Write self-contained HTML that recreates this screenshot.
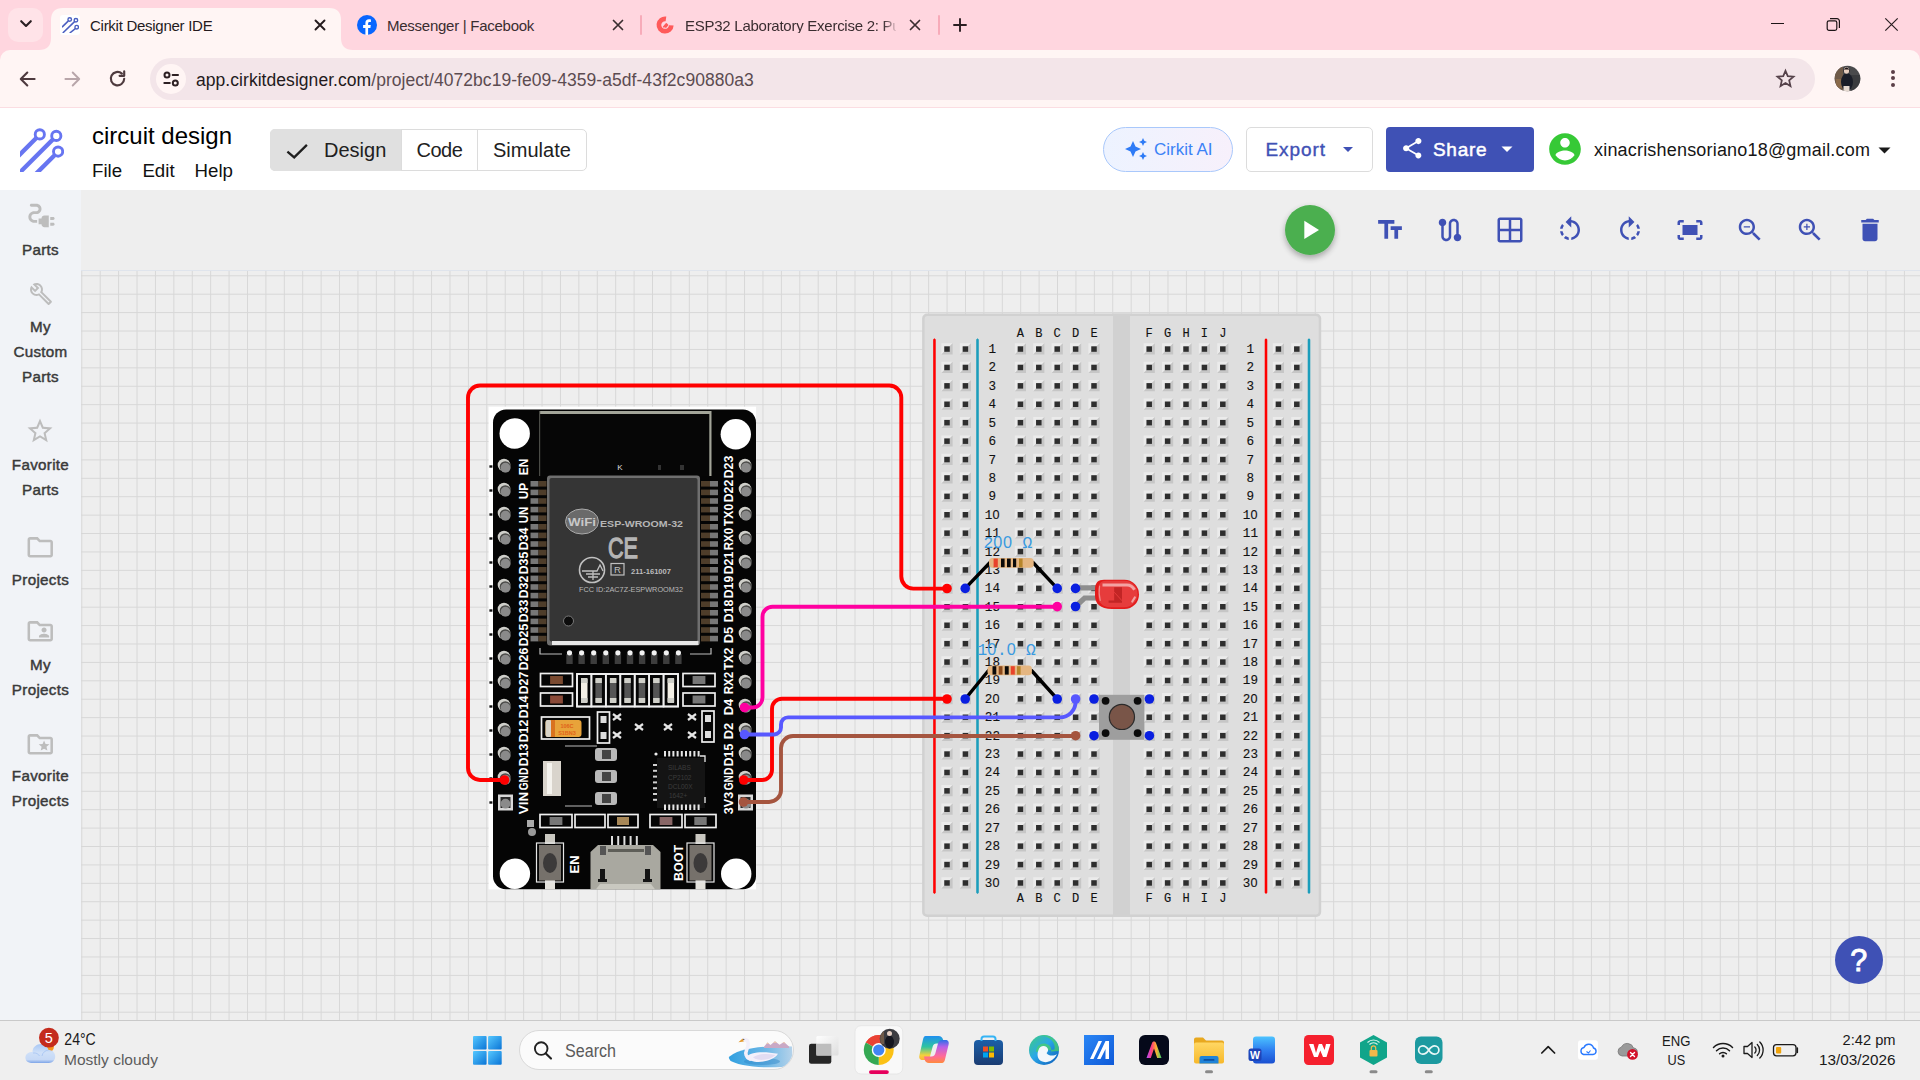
<!DOCTYPE html>
<html lang="en"><head><meta charset="utf-8"><title>Cirkit Designer IDE</title>
<style>
*{box-sizing:border-box;margin:0;padding:0}
html,body{width:1920px;height:1080px;overflow:hidden;background:#eee;font-family:"Liberation Sans",sans-serif;}
.abs{position:absolute}
.t{position:absolute;white-space:nowrap;line-height:1}
svg{display:block}
/* chrome */
#tabstrip{position:absolute;left:0;top:0;width:1920px;height:64px;background:#ffd6df}
#toolbar{position:absolute;left:0;top:50px;width:1920px;height:58px;background:#fff5f4;border-bottom:1px solid #fbdde2;border-radius:10px 10px 0 0}
#omni{position:absolute;left:150px;top:58px;width:1665px;height:42px;border-radius:21px;background:#f3e5e9}
/* app header */
#apphead{position:absolute;left:0;top:108px;width:1920px;height:82px;background:#fff}
#sidebar{position:absolute;left:0;top:190px;width:81px;height:830px;background:#f1f3f7}
#canvas{position:absolute;left:81px;top:190px;width:1839px;height:830px;background:#eeeeee;overflow:hidden}
#taskbar{position:absolute;left:0;top:1020px;width:1920px;height:60px;background:#efefef;border-top:1px solid #c9c9c9}
</style></head><body>
<div id="tabstrip"></div>
<!-- tab search button -->
<div class="abs" style="left:8px;top:8px;width:35px;height:34px;border-radius:10px;background:#ffe3e8"></div>
<svg class="abs" style="left:19px;top:19px" width="14" height="10" viewBox="0 0 14 10"><path d="M2.2 2.2 L7 7 L11.8 2.2" fill="none" stroke="#2a1f22" stroke-width="2.1" stroke-linecap="round" stroke-linejoin="round"/></svg>
<div id="toolbar"></div>
<!-- active tab -->
<svg class="abs" style="left:39px;top:8px" width="314" height="42" viewBox="0 0 314 42"><path d="M0 42 C8 42 12 38 12 30 L12 12 C12 4 16 0 24 0 L290 0 C298 0 302 4 302 12 L302 30 C302 38 306 42 314 42 Z" fill="#fff5f4"/></svg>
<!-- cirkit favicon -->
<div class="abs" style="left:60px;top:15px;width:20px;height:20px;border-radius:3px;background:#fff"></div>
<svg class="abs" style="left:62px;top:16px" width="17" height="17" viewBox="0 0 44 44"><g fill="none" stroke="#4a5fc1" stroke-width="3.6"><circle cx="20" cy="9" r="4.6"/><circle cx="36" cy="11" r="4.6"/><circle cx="38" cy="29" r="4.6"/></g><g stroke="#4a5fc1" stroke-width="4" stroke-linecap="butt"><path d="M16.5 12.5 L0 29"/><path d="M32.5 14.5 L2 44"/><path d="M34.5 32.5 L20 44"/></g></svg>
<span class="t" id="tab1" style="left:90px;top:17.5px;font-size:15px;letter-spacing:-.27px;color:#241a1d">Cirkit Designer IDE</span>
<svg class="abs" style="left:314px;top:19px" width="12" height="12" viewBox="0 0 12 12"><path d="M1.5 1.5 L10.5 10.5 M10.5 1.5 L1.5 10.5" stroke="#241a1d" stroke-width="1.9" stroke-linecap="round"/></svg>
<!-- facebook tab -->
<svg class="abs" style="left:357px;top:15px" width="20" height="20" viewBox="0 0 20 20"><circle cx="10" cy="10" r="10" fill="#0866ff"/><path d="M11.1 20 V12.9 H13.4 L13.8 10.1 H11.1 V8.4 C11.1 7.5 11.4 6.9 12.7 6.9 H13.9 V4.5 C13.6 4.4 12.8 4.3 11.9 4.3 C9.8 4.3 8.4 5.6 8.4 7.9 V10.1 H6.1 V12.9 H8.4 V19.9 Z" fill="#fff"/></svg>
<span class="t" id="tab2" style="left:387px;top:17.5px;font-size:15px;letter-spacing:-.26px;color:#3a2d30">Messenger | Facebook</span>
<svg class="abs" style="left:612px;top:19px" width="12" height="12" viewBox="0 0 12 12"><path d="M1.5 1.5 L10.5 10.5 M10.5 1.5 L1.5 10.5" stroke="#3a2d30" stroke-width="1.7" stroke-linecap="round"/></svg>
<div class="abs" style="left:640px;top:15px;width:2px;height:20px;background:#f7abb9;border-radius:1px"></div>
<!-- esp32 tab -->
<svg class="abs" style="left:655px;top:16px" width="20" height="20" viewBox="0 0 20 20"><path d="M16.29 9.32 A6.2 6.2 0 1 1 10.96 2.86" fill="none" stroke="#ff5a5a" stroke-width="4.700"/><path d="M8.300 11.300 L11.300 7.800 L12.600 9 L10.500 11.600" fill="#ff5a5a" stroke="#ff5a5a" stroke-width="1.400" stroke-linejoin="round"/></svg>
<span class="t" id="tab3" style="left:685px;top:17.5px;font-size:15px;letter-spacing:-.26px;color:#3a2d30;width:211px;overflow:hidden;-webkit-mask-image:linear-gradient(90deg,#000 94%,rgba(0,0,0,.15) 100%);mask-image:linear-gradient(90deg,#000 94%,rgba(0,0,0,.15) 100%)">ESP32 Laboratory Exercise 2: Pu</span>
<svg class="abs" style="left:909px;top:19px" width="12" height="12" viewBox="0 0 12 12"><path d="M1.5 1.5 L10.5 10.5 M10.5 1.5 L1.5 10.5" stroke="#3a2d30" stroke-width="1.7" stroke-linecap="round"/></svg>
<div class="abs" style="left:938px;top:15px;width:2px;height:20px;background:#f7abb9;border-radius:1px"></div>
<svg class="abs" style="left:953px;top:18px" width="14" height="14" viewBox="0 0 14 14"><path d="M7 1 V13 M1 7 H13" stroke="#2a1f22" stroke-width="1.9" stroke-linecap="round"/></svg>
<!-- window controls -->
<div class="abs" style="left:1771px;top:23px;width:13px;height:1.3px;background:#1d1416"></div>
<svg class="abs" style="left:1826px;top:17px" width="15" height="15" viewBox="0 0 15 15"><rect x="1.2" y="3.8" width="9.6" height="9.6" rx="1.8" fill="none" stroke="#1d1416" stroke-width="1.2"/><path d="M4 1.7 H11 A2.4 2.4 0 0 1 13.4 4.1 V11" fill="none" stroke="#1d1416" stroke-width="1.2"/></svg>
<svg class="abs" style="left:1884px;top:17px" width="15" height="15" viewBox="0 0 15 15"><path d="M1.3 1.3 L13.7 13.7 M13.7 1.3 L1.3 13.7" stroke="#2a1f22" stroke-width="1.2"/></svg>
<!-- nav buttons -->
<svg class="abs" style="left:19px;top:70.5px" width="17" height="16" viewBox="0 0 17 16"><path d="M8.300 1.500 L1.800 8 L8.300 14.500 M2.100 8 H15.600" fill="none" stroke="#4e3a3e" stroke-width="2.100" stroke-linecap="round" stroke-linejoin="round"/></svg>
<svg class="abs" style="left:63.5px;top:70.500px" width="17" height="16" viewBox="0 0 17 16"><path d="M8.700 1.500 L15.200 8 L8.700 14.500 M14.900 8 H1.400" fill="none" stroke="#b8a5a9" stroke-width="1.9" stroke-linecap="round" stroke-linejoin="round"/></svg>
<svg class="abs" style="left:108px;top:69px" width="19" height="19" viewBox="0 0 19 19"><path d="M16.200 9.800 A6.700 6.700 0 1 1 13.900 4.600" fill="none" stroke="#4e3a3e" stroke-width="2.150" stroke-linecap="round"/><path d="M16.200 2.200 V6.800 H11.600" fill="none" stroke="#4e3a3e" stroke-width="2.150" stroke-linecap="round" stroke-linejoin="round"/></svg>
<div id="omni"></div>
<div class="abs" style="left:156px;top:64px;width:30px;height:30px;border-radius:15px;background:#fff5f4"></div>
<svg class="abs" style="left:162px;top:70px" width="18" height="18" viewBox="0 0 18 18"><g fill="none" stroke="#2d2023" stroke-width="2" stroke-linecap="round"><circle cx="5" cy="5" r="2.500"/><path d="M10.600 5 H16"/><circle cx="13.300" cy="13" r="2.500"/><path d="M2.300 13 H7.800"/></g></svg>
<span class="t" id="url" style="left:196px;top:71.800px;font-size:17.5px;letter-spacing:.05px;color:#5c4c51"><span style="color:#231a1c">app.cirkitdesigner.com</span>/project/4072bc19-fe09-4359-a5df-43f2c90880a3</span>
<svg class="abs" style="left:1775px;top:68px" width="21" height="21" viewBox="0 0 24 24"><path d="M12 3.2 L14.6 9.3 L21.2 9.9 L16.2 14.2 L17.7 20.7 L12 17.2 L6.3 20.7 L7.8 14.2 L2.8 9.9 L9.4 9.3 Z" fill="none" stroke="#55424a" stroke-width="2" stroke-linejoin="miter"/></svg>
<!-- profile avatar -->
<svg class="abs" style="left:1834px;top:65px" width="27" height="27" viewBox="0 0 27 27"><defs><clipPath id="avc"><circle cx="13.5" cy="13.5" r="12.8"/></clipPath></defs><g clip-path="url(#avc)"><rect width="27" height="27" fill="#4a4a4c"/><rect x="0" y="0" width="9" height="27" fill="#6f5a48"/><rect x="17" y="10" width="10" height="17" fill="#3a3b3e"/><rect x="2" y="14" width="6" height="9" fill="#8a6a4a"/><ellipse cx="13" cy="17" rx="6" ry="9" fill="#1a1d28"/><ellipse cx="12.5" cy="5.5" rx="2.6" ry="3.2" fill="#e8cfc0"/><path d="M9.5 5 Q12.5 0 15.6 5 L15.6 8 L14.8 4.6 L10.2 4.6 L9.5 8Z" fill="#1c1416"/><rect x="9.5" y="21" width="6" height="6" fill="#e6d9d0"/></g></svg>

<div class="abs" style="left:1890.5px;top:69.5px;width:4px;height:4px;border-radius:2px;background:#5c3f47"></div>
<div class="abs" style="left:1890.5px;top:76.3px;width:4px;height:4px;border-radius:2px;background:#5c3f47"></div>
<div class="abs" style="left:1890.5px;top:83px;width:4px;height:4px;border-radius:2px;background:#5c3f47"></div>
<div id="apphead"></div>
<!-- logo -->
<svg class="abs" style="left:20px;top:126px" width="44" height="45.700" viewBox="0 0 44 45.700"><g fill="none" stroke="#6775f1" stroke-width="2.900"><circle cx="19.800" cy="8.400" r="4.600"/><circle cx="36.300" cy="9.900" r="4.600"/><circle cx="38.100" cy="25.600" r="4.600"/></g><g stroke="#6775f1" stroke-width="4.400"><path d="M16.300 12 L-2 30.300"/><path d="M32.800 13.500 L-2 48.300"/><path d="M34.600 29.200 L14 49.800"/></g></svg>
<span class="t" id="title" style="left:92px;top:124px;font-size:24px;color:#000">circuit design</span>
<span class="t" id="mfile" style="left:92px;top:162.300px;font-size:18.700px;color:#111">File</span>
<span class="t" id="medit" style="left:142.400px;top:162.300px;font-size:18.700px;color:#111">Edit</span>
<span class="t" id="mhelp" style="left:194.500px;top:162.300px;font-size:18.700px;color:#111">Help</span>
<!-- toggle group -->
<div class="abs" style="left:270px;top:129px;width:317px;height:42px;border:1px solid #dcdcdc;border-radius:5px;background:#fff"></div>
<div class="abs" style="left:270px;top:129px;width:131px;height:42px;border-radius:5px 0 0 5px;background:#e0e0e0"></div>
<div class="abs" style="left:400.5px;top:130px;width:1px;height:40px;background:#dcdcdc"></div>
<div class="abs" style="left:477.3px;top:130px;width:1px;height:40px;background:#dcdcdc"></div>
<svg class="abs" style="left:283px;top:138px" width="30" height="26" viewBox="283 138 30 26"><path d="M287.400 151.600 L294.200 157.400 L306.900 144.900" fill="none" stroke="#1f1f1f" stroke-width="2.300"/></svg>
<span class="t" id="bdesign" style="left:324px;top:139.800px;font-size:20px;color:#212121">Design</span>
<span class="t" id="bcode" style="left:416.500px;top:139.800px;font-size:20px;letter-spacing:-.5px;color:#212121">Code</span>
<span class="t" id="bsim" style="left:493px;top:139.800px;font-size:20px;color:#212121">Simulate</span>
<!-- Cirkit AI -->
<div class="abs" style="left:1103px;top:127px;width:130px;height:45px;border-radius:22.5px;border:1px solid #a9c8fb;background:linear-gradient(90deg,#edf3ff,#f7f0fb)"></div>
<svg class="abs" style="left:1124px;top:137px" width="24" height="24" viewBox="0 0 24 24"><path d="M19 9l1.250-2.750L23 5l-2.750-1.250L19 1l-1.250 2.750L15 5l2.750 1.250L19 9zm-7.500.5L9 4 6.500 9.500 1 12l5.500 2.500L9 20l2.500-5.500L17 12l-5.500-2.500zM19 15l-1.250 2.750L15 19l2.750 1.250L19 23l1.250-2.750L23 19l-2.750-1.250L19 15z" fill="#2f7bf6"/></svg>
<span class="t" id="cai" style="left:1154px;top:141px;font-size:17px;color:#3b82f6">Cirkit AI</span>
<!-- Export -->
<div class="abs" style="left:1246px;top:127px;width:127px;height:45px;border-radius:5px;border:1px solid #dcdcdc;background:#fff"></div>
<span class="t" id="bexport" style="left:1265.500px;top:140px;font-size:19px;letter-spacing:.9px;-webkit-text-stroke:.38px #3f51b5;color:#3f51b5">Export</span>
<svg class="abs" style="left:1342px;top:146px" width="12" height="7" viewBox="0 0 12 7"><path d="M1 1 H11 L6 6 Z" fill="#3f51b5"/></svg>
<!-- Share -->
<div class="abs" style="left:1386px;top:127px;width:148px;height:45px;border-radius:4px;background:#3f51b5"></div>
<svg class="abs" style="left:1400.200px;top:136.200px" width="24.500" height="24.500" viewBox="0 0 24 24"><path d="M18 16.080c-.76 0-1.440.3-1.960.77L8.910 12.700c.05-.23.090-.46.090-.7s-.04-.47-.09-.7l7.050-4.110c.54.5 1.250.81 2.040.81 1.660 0 3-1.340 3-3s-1.340-3-3-3-3 1.340-3 3c0 .24.040.47.090.7L8.040 9.810C7.500 9.310 6.790 9 6 9c-1.660 0-3 1.340-3 3s1.340 3 3 3c.79 0 1.500-.31 2.040-.81l7.120 4.160c-.05.21-.08.430-.08.650 0 1.610 1.310 2.920 2.920 2.920s2.920-1.310 2.920-2.920-1.310-2.920-2.920-2.920z" fill="#fff"/></svg>
<span class="t" id="bshare" style="left:1433px;top:140px;font-size:19px;letter-spacing:.7px;-webkit-text-stroke:.5px #fff;color:#fff">Share</span>
<svg class="abs" style="left:1501px;top:146px" width="12" height="7" viewBox="0 0 12 7"><path d="M0.500 0.500 H11.500 L6 6 Z" fill="#fff"/></svg>
<!-- account -->
<div class="abs" style="left:1551px;top:135px;width:28px;height:28px;border-radius:14px;background:#fff"></div>
<svg class="abs" style="left:1546px;top:130px" width="38" height="38" viewBox="0 0 24 24"><path d="M12 2C6.480 2 2 6.480 2 12s4.480 10 10 10 10-4.480 10-10S17.520 2 12 2zm0 3c1.660 0 3 1.340 3 3s-1.340 3-3 3-3-1.340-3-3 1.340-3 3-3zm0 14.200c-2.500 0-4.710-1.280-6-3.220.03-1.990 4-3.080 6-3.080 1.990 0 5.970 1.090 6 3.080-1.290 1.940-3.500 3.220-6 3.220z" fill="#36c936"/></svg>
<span class="t" id="email" style="left:1594px;top:140.800px;font-size:18px;letter-spacing:.19px;color:#161616">xinacrishensoriano18@gmail.com</span>
<svg class="abs" style="left:1878px;top:147px" width="13" height="7" viewBox="0 0 13 7"><path d="M0.500 0.500 H12.500 L6.500 6.500 Z" fill="#1a1a1a"/></svg>
<div id="sidebar"></div>
<svg class="abs" style="left:23.500px;top:198px" width="35" height="35" viewBox="0 0 24 24"><g fill="#bdbdbd"><path d="M21 14c0-.55-.45-1-1-1h-2v2h2c.55 0 1-.45 1-1zM20 17h-2v2h2c.55 0 1-.45 1-1s-.45-1-1-1zM12 14h-2v4h2c0 1.100.9 2 2 2h3v-8h-3c-1.100 0-2 .9-2 2z"/><path d="M5 13c0-1.100.9-2 2-2h1.500c1.930 0 3.500-1.570 3.500-3.500S10.430 4 8.500 4H5c-.55 0-1 .45-1 1s.45 1 1 1h3.500c.83 0 1.500.67 1.500 1.500S9.330 9 8.500 9H7c-2.210 0-4 1.790-4 4s1.790 4 4 4h2v-2H7c-1.100 0-2-.9-2-2z"/></g></svg>
<span class="t sb" id="sb1" style="top:242.1px">Parts</span>
<svg class="abs" style="left:28.500px;top:281.500px" width="24" height="24" viewBox="0 0 24 24"><path fill="#bdbdbd" d="M22.610 18.990l-9.080-9.080c.93-2.340.45-5.100-1.440-7C9.790.61 6.210.4 3.660 2.260L7.500 6.110 6.080 7.520 2.250 3.690C.39 6.230.6 9.820 2.900 12.110c1.860 1.860 4.570 2.350 6.890 1.480l9.110 9.110c.39.390 1.020.39 1.410 0l2.300-2.300c.4-.38.400-1.010 0-1.410zm-3 1.600l-9.460-9.460c-.61.45-1.290.72-2 .82-1.360.2-2.790-.21-3.830-1.250C3.370 9.760 2.930 8.500 3 7.260l3.090 3.090 4.240-4.240-3.090-3.090c1.240-.07 2.490.37 3.440 1.310 1.080 1.080 1.490 2.570 1.240 3.960-.12.710-.42 1.370-.88 1.960l9.450 9.450-.88.890z"/></svg>
<span class="t sb" id="sb2" style="top:318.9px">My</span>
<span class="t sb" id="sb3" style="top:343.9px">Custom</span>
<span class="t sb" id="sb4" style="top:368.5px">Parts</span>
<svg class="abs" style="left:25.300px;top:415.700px" width="30" height="30" viewBox="0 0 24 24"><path fill="#bdbdbd" d="M22 9.240l-7.190-.62L12 2 9.190 8.630 2 9.240l5.460 4.730L5.820 21 12 17.270 18.180 21l-1.630-7.030L22 9.240zM12 15.400l-3.760 2.270 1-4.280-3.320-2.880 4.380-.38L12 6.100l1.710 4.040 4.380.38-3.320 2.880 1 4.280L12 15.400z"/></svg>
<span class="t sb" id="sb5" style="top:456.9px">Favorite</span>
<span class="t sb" id="sb6" style="top:481.9px">Parts</span>
<svg class="abs" style="left:25.300px;top:531.700px" width="30.500" height="30.500" viewBox="0 0 24 24"><path fill="#bdbdbd" d="M9.170 6l2 2H20v10H4V6h5.170M10 4H4c-1.100 0-1.990.9-1.990 2L2 18c0 1.100.9 2 2 2h16c1.100 0 2-.9 2-2V8c0-1.100-.9-2-2-2h-8l-2-2z"/></svg>
<span class="t sb" id="sb7" style="top:571.7px">Projects</span>
<svg class="abs" style="left:25.300px;top:615.600px" width="30.500" height="30.500" viewBox="0 0 24 24"><path fill="#bdbdbd" d="M20 6h-8l-2-2H4c-1.100 0-1.990.9-1.990 2L2 18c0 1.100.9 2 2 2h16c1.100 0 2-.9 2-2V8c0-1.100-.9-2-2-2zm0 12H4V6h5.170l2 2H20v10zm-5-5c1.100 0 2-.9 2-2s-.9-2-2-2-2 .9-2 2 .9 2 2 2zm-4 4h8v-1c0-1.330-2.670-2-4-2s-4 .67-4 2v1z"/></svg>
<span class="t sb" id="sb8" style="top:657.2px">My</span>
<span class="t sb" id="sb9" style="top:681.6px">Projects</span>
<svg class="abs" style="left:25.300px;top:728.500px" width="30.500" height="30.500" viewBox="0 0 24 24"><path fill="#bdbdbd" d="M20 6h-8l-2-2H4c-1.100 0-2 .9-2 2v12c0 1.100.9 2 2 2h16c1.100 0 2-.9 2-2V8c0-1.100-.9-2-2-2zm0 12H4V6h5.170l2 2H20v10zm-6.920-3.960L12.390 17 15 15.470 17.610 17l-.69-2.960 2.300-1.990-3.030-.26L15 9l-1.190 2.790-3.030.26z"/></svg>
<span class="t sb" id="sb10" style="top:768.2px">Favorite</span>
<span class="t sb" id="sb11" style="top:793.0px">Projects</span>
<style>.sb{left:0;width:81px;text-align:center;font-size:15.200px;color:#3a3a3a;letter-spacing:.3px;-webkit-text-stroke:.45px #3a3a3a}</style>
<div id="canvas"></div>
<svg class="abs" style="left:81px;top:190px" width="1839" height="830" viewBox="81 190 1839 830" font-family="'Liberation Mono',monospace">
<defs>
<pattern id="grid" x="81.30" y="275.30" width="18.41" height="18.41" patternUnits="userSpaceOnUse"><rect x="0" y="0" width="1" height="18.41" fill="#d7d7d7"/><rect x="0" y="0" width="18.41" height="1" fill="#d7d7d7"/></pattern>
<g id="h"><path d="M-5.600 -5.500 H5.600 L-5.600 5.700 Z" fill="#ebebeb"/><path d="M5.600 5.700 H-5.600 L5.600 -5.500 Z" fill="#c6c6c6"/><rect x="-2.750" y="-2.500" width="5.500" height="5.500" fill="#2e2e2e"/></g>
</defs>
<rect x="81" y="270" width="1839" height="750" fill="url(#grid)"/>
<rect x="81" y="270" width="1839" height="1" fill="#dfe4ec"/><g id="bb">
<rect x="922.100" y="313.600" width="399.100" height="603.300" rx="5" fill="#d1d1d1"/>
<rect x="924.600" y="316" width="394.100" height="598.600" rx="3" fill="#dedede"/>
<rect x="1113" y="313.600" width="17" height="603.300" fill="#d1d1d1"/>
<path d="M933.17 339.500 L934.45 338.300 L935.73 339.500 V892.800 L934.45 894 L933.17 892.800 Z" fill="#ff0000"/>
<path d="M1264.72 339.500 L1266.00 338.300 L1267.28 339.500 V892.800 L1266.00 894 L1264.72 892.800 Z" fill="#ff0000"/>
<path d="M976.22 339.500 L977.50 338.300 L978.78 339.500 V892.800 L977.50 894 L976.22 892.800 Z" fill="#1b9dbb"/>
<path d="M1307.72 339.500 L1309.00 338.300 L1310.28 339.500 V892.800 L1309.00 894 L1307.72 892.800 Z" fill="#1b9dbb"/>
<use href="#h" x="947.0" y="348.8"/><use href="#h" x="965.4" y="348.8"/><use href="#h" x="1278.4" y="348.8"/><use href="#h" x="1296.8" y="348.8"/><use href="#h" x="1020.4" y="348.8"/><use href="#h" x="1038.8" y="348.8"/><use href="#h" x="1057.2" y="348.8"/><use href="#h" x="1075.6" y="348.8"/><use href="#h" x="1094.0" y="348.8"/><use href="#h" x="1149.2" y="348.8"/><use href="#h" x="1167.6" y="348.8"/><use href="#h" x="1186.0" y="348.8"/><use href="#h" x="1204.4" y="348.8"/><use href="#h" x="1222.8" y="348.8"/><use href="#h" x="947.0" y="367.2"/><use href="#h" x="965.4" y="367.2"/><use href="#h" x="1278.4" y="367.2"/><use href="#h" x="1296.8" y="367.2"/><use href="#h" x="1020.4" y="367.2"/><use href="#h" x="1038.8" y="367.2"/><use href="#h" x="1057.2" y="367.2"/><use href="#h" x="1075.6" y="367.2"/><use href="#h" x="1094.0" y="367.2"/><use href="#h" x="1149.2" y="367.2"/><use href="#h" x="1167.6" y="367.2"/><use href="#h" x="1186.0" y="367.2"/><use href="#h" x="1204.4" y="367.2"/><use href="#h" x="1222.8" y="367.2"/><use href="#h" x="947.0" y="385.6"/><use href="#h" x="965.4" y="385.6"/><use href="#h" x="1278.4" y="385.6"/><use href="#h" x="1296.8" y="385.6"/><use href="#h" x="1020.4" y="385.6"/><use href="#h" x="1038.8" y="385.6"/><use href="#h" x="1057.2" y="385.6"/><use href="#h" x="1075.6" y="385.6"/><use href="#h" x="1094.0" y="385.6"/><use href="#h" x="1149.2" y="385.6"/><use href="#h" x="1167.6" y="385.6"/><use href="#h" x="1186.0" y="385.6"/><use href="#h" x="1204.4" y="385.6"/><use href="#h" x="1222.8" y="385.6"/><use href="#h" x="947.0" y="404.0"/><use href="#h" x="965.4" y="404.0"/><use href="#h" x="1278.4" y="404.0"/><use href="#h" x="1296.8" y="404.0"/><use href="#h" x="1020.4" y="404.0"/><use href="#h" x="1038.8" y="404.0"/><use href="#h" x="1057.2" y="404.0"/><use href="#h" x="1075.6" y="404.0"/><use href="#h" x="1094.0" y="404.0"/><use href="#h" x="1149.2" y="404.0"/><use href="#h" x="1167.6" y="404.0"/><use href="#h" x="1186.0" y="404.0"/><use href="#h" x="1204.4" y="404.0"/><use href="#h" x="1222.8" y="404.0"/><use href="#h" x="947.0" y="422.4"/><use href="#h" x="965.4" y="422.4"/><use href="#h" x="1278.4" y="422.4"/><use href="#h" x="1296.8" y="422.4"/><use href="#h" x="1020.4" y="422.4"/><use href="#h" x="1038.8" y="422.4"/><use href="#h" x="1057.2" y="422.4"/><use href="#h" x="1075.6" y="422.4"/><use href="#h" x="1094.0" y="422.4"/><use href="#h" x="1149.2" y="422.4"/><use href="#h" x="1167.6" y="422.4"/><use href="#h" x="1186.0" y="422.4"/><use href="#h" x="1204.4" y="422.4"/><use href="#h" x="1222.8" y="422.4"/><use href="#h" x="947.0" y="440.9"/><use href="#h" x="965.4" y="440.9"/><use href="#h" x="1278.4" y="440.9"/><use href="#h" x="1296.8" y="440.9"/><use href="#h" x="1020.4" y="440.9"/><use href="#h" x="1038.8" y="440.9"/><use href="#h" x="1057.2" y="440.9"/><use href="#h" x="1075.6" y="440.9"/><use href="#h" x="1094.0" y="440.9"/><use href="#h" x="1149.2" y="440.9"/><use href="#h" x="1167.6" y="440.9"/><use href="#h" x="1186.0" y="440.9"/><use href="#h" x="1204.4" y="440.9"/><use href="#h" x="1222.8" y="440.9"/><use href="#h" x="947.0" y="459.3"/><use href="#h" x="965.4" y="459.3"/><use href="#h" x="1278.4" y="459.3"/><use href="#h" x="1296.8" y="459.3"/><use href="#h" x="1020.4" y="459.3"/><use href="#h" x="1038.8" y="459.3"/><use href="#h" x="1057.2" y="459.3"/><use href="#h" x="1075.6" y="459.3"/><use href="#h" x="1094.0" y="459.3"/><use href="#h" x="1149.2" y="459.3"/><use href="#h" x="1167.6" y="459.3"/><use href="#h" x="1186.0" y="459.3"/><use href="#h" x="1204.4" y="459.3"/><use href="#h" x="1222.8" y="459.3"/><use href="#h" x="947.0" y="477.7"/><use href="#h" x="965.4" y="477.7"/><use href="#h" x="1278.4" y="477.7"/><use href="#h" x="1296.8" y="477.7"/><use href="#h" x="1020.4" y="477.7"/><use href="#h" x="1038.8" y="477.7"/><use href="#h" x="1057.2" y="477.7"/><use href="#h" x="1075.6" y="477.7"/><use href="#h" x="1094.0" y="477.7"/><use href="#h" x="1149.2" y="477.7"/><use href="#h" x="1167.6" y="477.7"/><use href="#h" x="1186.0" y="477.7"/><use href="#h" x="1204.4" y="477.7"/><use href="#h" x="1222.8" y="477.7"/><use href="#h" x="947.0" y="496.1"/><use href="#h" x="965.4" y="496.1"/><use href="#h" x="1278.4" y="496.1"/><use href="#h" x="1296.8" y="496.1"/><use href="#h" x="1020.4" y="496.1"/><use href="#h" x="1038.8" y="496.1"/><use href="#h" x="1057.2" y="496.1"/><use href="#h" x="1075.6" y="496.1"/><use href="#h" x="1094.0" y="496.1"/><use href="#h" x="1149.2" y="496.1"/><use href="#h" x="1167.6" y="496.1"/><use href="#h" x="1186.0" y="496.1"/><use href="#h" x="1204.4" y="496.1"/><use href="#h" x="1222.8" y="496.1"/><use href="#h" x="947.0" y="514.5"/><use href="#h" x="965.4" y="514.5"/><use href="#h" x="1278.4" y="514.5"/><use href="#h" x="1296.8" y="514.5"/><use href="#h" x="1020.4" y="514.5"/><use href="#h" x="1038.8" y="514.5"/><use href="#h" x="1057.2" y="514.5"/><use href="#h" x="1075.6" y="514.5"/><use href="#h" x="1094.0" y="514.5"/><use href="#h" x="1149.2" y="514.5"/><use href="#h" x="1167.6" y="514.5"/><use href="#h" x="1186.0" y="514.5"/><use href="#h" x="1204.4" y="514.5"/><use href="#h" x="1222.8" y="514.5"/><use href="#h" x="947.0" y="532.9"/><use href="#h" x="965.4" y="532.9"/><use href="#h" x="1278.4" y="532.9"/><use href="#h" x="1296.8" y="532.9"/><use href="#h" x="1020.4" y="532.9"/><use href="#h" x="1038.8" y="532.9"/><use href="#h" x="1057.2" y="532.9"/><use href="#h" x="1075.6" y="532.9"/><use href="#h" x="1094.0" y="532.9"/><use href="#h" x="1149.2" y="532.9"/><use href="#h" x="1167.6" y="532.9"/><use href="#h" x="1186.0" y="532.9"/><use href="#h" x="1204.4" y="532.9"/><use href="#h" x="1222.8" y="532.9"/><use href="#h" x="947.0" y="551.3"/><use href="#h" x="965.4" y="551.3"/><use href="#h" x="1278.4" y="551.3"/><use href="#h" x="1296.8" y="551.3"/><use href="#h" x="1020.4" y="551.3"/><use href="#h" x="1038.8" y="551.3"/><use href="#h" x="1057.2" y="551.3"/><use href="#h" x="1075.6" y="551.3"/><use href="#h" x="1094.0" y="551.3"/><use href="#h" x="1149.2" y="551.3"/><use href="#h" x="1167.6" y="551.3"/><use href="#h" x="1186.0" y="551.3"/><use href="#h" x="1204.4" y="551.3"/><use href="#h" x="1222.8" y="551.3"/><use href="#h" x="947.0" y="569.7"/><use href="#h" x="965.4" y="569.7"/><use href="#h" x="1278.4" y="569.7"/><use href="#h" x="1296.8" y="569.7"/><use href="#h" x="1020.4" y="569.7"/><use href="#h" x="1038.8" y="569.7"/><use href="#h" x="1057.2" y="569.7"/><use href="#h" x="1075.6" y="569.7"/><use href="#h" x="1094.0" y="569.7"/><use href="#h" x="1149.2" y="569.7"/><use href="#h" x="1167.6" y="569.7"/><use href="#h" x="1186.0" y="569.7"/><use href="#h" x="1204.4" y="569.7"/><use href="#h" x="1222.8" y="569.7"/><use href="#h" x="947.0" y="588.1"/><use href="#h" x="965.4" y="588.1"/><use href="#h" x="1278.4" y="588.1"/><use href="#h" x="1296.8" y="588.1"/><use href="#h" x="1020.4" y="588.1"/><use href="#h" x="1038.8" y="588.1"/><use href="#h" x="1057.2" y="588.1"/><use href="#h" x="1075.6" y="588.1"/><use href="#h" x="1094.0" y="588.1"/><use href="#h" x="1149.2" y="588.1"/><use href="#h" x="1167.6" y="588.1"/><use href="#h" x="1186.0" y="588.1"/><use href="#h" x="1204.4" y="588.1"/><use href="#h" x="1222.8" y="588.1"/><use href="#h" x="947.0" y="606.5"/><use href="#h" x="965.4" y="606.5"/><use href="#h" x="1278.4" y="606.5"/><use href="#h" x="1296.8" y="606.5"/><use href="#h" x="1020.4" y="606.5"/><use href="#h" x="1038.8" y="606.5"/><use href="#h" x="1057.2" y="606.5"/><use href="#h" x="1075.6" y="606.5"/><use href="#h" x="1094.0" y="606.5"/><use href="#h" x="1149.2" y="606.5"/><use href="#h" x="1167.6" y="606.5"/><use href="#h" x="1186.0" y="606.5"/><use href="#h" x="1204.4" y="606.5"/><use href="#h" x="1222.8" y="606.5"/><use href="#h" x="947.0" y="625.0"/><use href="#h" x="965.4" y="625.0"/><use href="#h" x="1278.4" y="625.0"/><use href="#h" x="1296.8" y="625.0"/><use href="#h" x="1020.4" y="625.0"/><use href="#h" x="1038.8" y="625.0"/><use href="#h" x="1057.2" y="625.0"/><use href="#h" x="1075.6" y="625.0"/><use href="#h" x="1094.0" y="625.0"/><use href="#h" x="1149.2" y="625.0"/><use href="#h" x="1167.6" y="625.0"/><use href="#h" x="1186.0" y="625.0"/><use href="#h" x="1204.4" y="625.0"/><use href="#h" x="1222.8" y="625.0"/><use href="#h" x="947.0" y="643.4"/><use href="#h" x="965.4" y="643.4"/><use href="#h" x="1278.4" y="643.4"/><use href="#h" x="1296.8" y="643.4"/><use href="#h" x="1020.4" y="643.4"/><use href="#h" x="1038.8" y="643.4"/><use href="#h" x="1057.2" y="643.4"/><use href="#h" x="1075.6" y="643.4"/><use href="#h" x="1094.0" y="643.4"/><use href="#h" x="1149.2" y="643.4"/><use href="#h" x="1167.6" y="643.4"/><use href="#h" x="1186.0" y="643.4"/><use href="#h" x="1204.4" y="643.4"/><use href="#h" x="1222.8" y="643.4"/><use href="#h" x="947.0" y="661.8"/><use href="#h" x="965.4" y="661.8"/><use href="#h" x="1278.4" y="661.8"/><use href="#h" x="1296.8" y="661.8"/><use href="#h" x="1020.4" y="661.8"/><use href="#h" x="1038.8" y="661.8"/><use href="#h" x="1057.2" y="661.8"/><use href="#h" x="1075.6" y="661.8"/><use href="#h" x="1094.0" y="661.8"/><use href="#h" x="1149.2" y="661.8"/><use href="#h" x="1167.6" y="661.8"/><use href="#h" x="1186.0" y="661.8"/><use href="#h" x="1204.4" y="661.8"/><use href="#h" x="1222.8" y="661.8"/><use href="#h" x="947.0" y="680.2"/><use href="#h" x="965.4" y="680.2"/><use href="#h" x="1278.4" y="680.2"/><use href="#h" x="1296.8" y="680.2"/><use href="#h" x="1020.4" y="680.2"/><use href="#h" x="1038.8" y="680.2"/><use href="#h" x="1057.2" y="680.2"/><use href="#h" x="1075.6" y="680.2"/><use href="#h" x="1094.0" y="680.2"/><use href="#h" x="1149.2" y="680.2"/><use href="#h" x="1167.6" y="680.2"/><use href="#h" x="1186.0" y="680.2"/><use href="#h" x="1204.4" y="680.2"/><use href="#h" x="1222.8" y="680.2"/><use href="#h" x="947.0" y="698.6"/><use href="#h" x="965.4" y="698.6"/><use href="#h" x="1278.4" y="698.6"/><use href="#h" x="1296.8" y="698.6"/><use href="#h" x="1020.4" y="698.6"/><use href="#h" x="1038.8" y="698.6"/><use href="#h" x="1057.2" y="698.6"/><use href="#h" x="1075.6" y="698.6"/><use href="#h" x="1094.0" y="698.6"/><use href="#h" x="1149.2" y="698.6"/><use href="#h" x="1167.6" y="698.6"/><use href="#h" x="1186.0" y="698.6"/><use href="#h" x="1204.4" y="698.6"/><use href="#h" x="1222.8" y="698.6"/><use href="#h" x="947.0" y="717.0"/><use href="#h" x="965.4" y="717.0"/><use href="#h" x="1278.4" y="717.0"/><use href="#h" x="1296.8" y="717.0"/><use href="#h" x="1020.4" y="717.0"/><use href="#h" x="1038.8" y="717.0"/><use href="#h" x="1057.2" y="717.0"/><use href="#h" x="1075.6" y="717.0"/><use href="#h" x="1094.0" y="717.0"/><use href="#h" x="1149.2" y="717.0"/><use href="#h" x="1167.6" y="717.0"/><use href="#h" x="1186.0" y="717.0"/><use href="#h" x="1204.4" y="717.0"/><use href="#h" x="1222.8" y="717.0"/><use href="#h" x="947.0" y="735.4"/><use href="#h" x="965.4" y="735.4"/><use href="#h" x="1278.4" y="735.4"/><use href="#h" x="1296.8" y="735.4"/><use href="#h" x="1020.4" y="735.4"/><use href="#h" x="1038.8" y="735.4"/><use href="#h" x="1057.2" y="735.4"/><use href="#h" x="1075.6" y="735.4"/><use href="#h" x="1094.0" y="735.4"/><use href="#h" x="1149.2" y="735.4"/><use href="#h" x="1167.6" y="735.4"/><use href="#h" x="1186.0" y="735.4"/><use href="#h" x="1204.4" y="735.4"/><use href="#h" x="1222.8" y="735.4"/><use href="#h" x="947.0" y="753.8"/><use href="#h" x="965.4" y="753.8"/><use href="#h" x="1278.4" y="753.8"/><use href="#h" x="1296.8" y="753.8"/><use href="#h" x="1020.4" y="753.8"/><use href="#h" x="1038.8" y="753.8"/><use href="#h" x="1057.2" y="753.8"/><use href="#h" x="1075.6" y="753.8"/><use href="#h" x="1094.0" y="753.8"/><use href="#h" x="1149.2" y="753.8"/><use href="#h" x="1167.6" y="753.8"/><use href="#h" x="1186.0" y="753.8"/><use href="#h" x="1204.4" y="753.8"/><use href="#h" x="1222.8" y="753.8"/><use href="#h" x="947.0" y="772.2"/><use href="#h" x="965.4" y="772.2"/><use href="#h" x="1278.4" y="772.2"/><use href="#h" x="1296.8" y="772.2"/><use href="#h" x="1020.4" y="772.2"/><use href="#h" x="1038.8" y="772.2"/><use href="#h" x="1057.2" y="772.2"/><use href="#h" x="1075.6" y="772.2"/><use href="#h" x="1094.0" y="772.2"/><use href="#h" x="1149.2" y="772.2"/><use href="#h" x="1167.6" y="772.2"/><use href="#h" x="1186.0" y="772.2"/><use href="#h" x="1204.4" y="772.2"/><use href="#h" x="1222.8" y="772.2"/><use href="#h" x="947.0" y="790.6"/><use href="#h" x="965.4" y="790.6"/><use href="#h" x="1278.4" y="790.6"/><use href="#h" x="1296.8" y="790.6"/><use href="#h" x="1020.4" y="790.6"/><use href="#h" x="1038.8" y="790.6"/><use href="#h" x="1057.2" y="790.6"/><use href="#h" x="1075.6" y="790.6"/><use href="#h" x="1094.0" y="790.6"/><use href="#h" x="1149.2" y="790.6"/><use href="#h" x="1167.6" y="790.6"/><use href="#h" x="1186.0" y="790.6"/><use href="#h" x="1204.4" y="790.6"/><use href="#h" x="1222.8" y="790.6"/><use href="#h" x="947.0" y="809.0"/><use href="#h" x="965.4" y="809.0"/><use href="#h" x="1278.4" y="809.0"/><use href="#h" x="1296.8" y="809.0"/><use href="#h" x="1020.4" y="809.0"/><use href="#h" x="1038.8" y="809.0"/><use href="#h" x="1057.2" y="809.0"/><use href="#h" x="1075.6" y="809.0"/><use href="#h" x="1094.0" y="809.0"/><use href="#h" x="1149.2" y="809.0"/><use href="#h" x="1167.6" y="809.0"/><use href="#h" x="1186.0" y="809.0"/><use href="#h" x="1204.4" y="809.0"/><use href="#h" x="1222.8" y="809.0"/><use href="#h" x="947.0" y="827.5"/><use href="#h" x="965.4" y="827.5"/><use href="#h" x="1278.4" y="827.5"/><use href="#h" x="1296.8" y="827.5"/><use href="#h" x="1020.4" y="827.5"/><use href="#h" x="1038.8" y="827.5"/><use href="#h" x="1057.2" y="827.5"/><use href="#h" x="1075.6" y="827.5"/><use href="#h" x="1094.0" y="827.5"/><use href="#h" x="1149.2" y="827.5"/><use href="#h" x="1167.6" y="827.5"/><use href="#h" x="1186.0" y="827.5"/><use href="#h" x="1204.4" y="827.5"/><use href="#h" x="1222.8" y="827.5"/><use href="#h" x="947.0" y="845.9"/><use href="#h" x="965.4" y="845.9"/><use href="#h" x="1278.4" y="845.9"/><use href="#h" x="1296.8" y="845.9"/><use href="#h" x="1020.4" y="845.9"/><use href="#h" x="1038.8" y="845.9"/><use href="#h" x="1057.2" y="845.9"/><use href="#h" x="1075.6" y="845.9"/><use href="#h" x="1094.0" y="845.9"/><use href="#h" x="1149.2" y="845.9"/><use href="#h" x="1167.6" y="845.9"/><use href="#h" x="1186.0" y="845.9"/><use href="#h" x="1204.4" y="845.9"/><use href="#h" x="1222.8" y="845.9"/><use href="#h" x="947.0" y="864.3"/><use href="#h" x="965.4" y="864.3"/><use href="#h" x="1278.4" y="864.3"/><use href="#h" x="1296.8" y="864.3"/><use href="#h" x="1020.4" y="864.3"/><use href="#h" x="1038.8" y="864.3"/><use href="#h" x="1057.2" y="864.3"/><use href="#h" x="1075.6" y="864.3"/><use href="#h" x="1094.0" y="864.3"/><use href="#h" x="1149.2" y="864.3"/><use href="#h" x="1167.6" y="864.3"/><use href="#h" x="1186.0" y="864.3"/><use href="#h" x="1204.4" y="864.3"/><use href="#h" x="1222.8" y="864.3"/><use href="#h" x="947.0" y="882.7"/><use href="#h" x="965.4" y="882.7"/><use href="#h" x="1278.4" y="882.7"/><use href="#h" x="1296.8" y="882.7"/><use href="#h" x="1020.4" y="882.7"/><use href="#h" x="1038.8" y="882.7"/><use href="#h" x="1057.2" y="882.7"/><use href="#h" x="1075.6" y="882.7"/><use href="#h" x="1094.0" y="882.7"/><use href="#h" x="1149.2" y="882.7"/><use href="#h" x="1167.6" y="882.7"/><use href="#h" x="1186.0" y="882.7"/><use href="#h" x="1204.4" y="882.7"/><use href="#h" x="1222.8" y="882.7"/>
<g font-size="12.600" fill="#111" stroke="#111" stroke-width=".12" text-anchor="middle">
<text x="992.4" y="353.0">1</text><text x="1250.4" y="353.0">1</text>
<text x="992.4" y="371.4">2</text><text x="1250.4" y="371.4">2</text>
<text x="992.4" y="389.8">3</text><text x="1250.4" y="389.8">3</text>
<text x="992.4" y="408.2">4</text><text x="1250.4" y="408.2">4</text>
<text x="992.4" y="426.6">5</text><text x="1250.4" y="426.6">5</text>
<text x="992.4" y="445.1">6</text><text x="1250.4" y="445.1">6</text>
<text x="992.4" y="463.5">7</text><text x="1250.4" y="463.5">7</text>
<text x="992.4" y="481.9">8</text><text x="1250.4" y="481.9">8</text>
<text x="992.4" y="500.3">9</text><text x="1250.4" y="500.3">9</text>
<text x="992.4" y="518.7">1<tspan font-family="'Liberation Sans',sans-serif" letter-spacing=".5">0</tspan></text><text x="1250.4" y="518.7">1<tspan font-family="'Liberation Sans',sans-serif" letter-spacing=".5">0</tspan></text>
<text x="992.4" y="537.1">11</text><text x="1250.4" y="537.1">11</text>
<text x="992.4" y="555.5">12</text><text x="1250.4" y="555.5">12</text>
<text x="992.4" y="573.9">13</text><text x="1250.4" y="573.9">13</text>
<text x="992.4" y="592.3">14</text><text x="1250.4" y="592.3">14</text>
<text x="992.4" y="610.7">15</text><text x="1250.4" y="610.7">15</text>
<text x="992.4" y="629.2">16</text><text x="1250.4" y="629.2">16</text>
<text x="992.4" y="647.6">17</text><text x="1250.4" y="647.6">17</text>
<text x="992.4" y="666.0">18</text><text x="1250.4" y="666.0">18</text>
<text x="992.4" y="684.4">19</text><text x="1250.4" y="684.4">19</text>
<text x="992.4" y="702.8">2<tspan font-family="'Liberation Sans',sans-serif" letter-spacing=".5">0</tspan></text><text x="1250.4" y="702.8">2<tspan font-family="'Liberation Sans',sans-serif" letter-spacing=".5">0</tspan></text>
<text x="992.4" y="721.2">21</text><text x="1250.4" y="721.2">21</text>
<text x="992.4" y="739.6">22</text><text x="1250.4" y="739.6">22</text>
<text x="992.4" y="758.0">23</text><text x="1250.4" y="758.0">23</text>
<text x="992.4" y="776.4">24</text><text x="1250.4" y="776.4">24</text>
<text x="992.4" y="794.8">25</text><text x="1250.4" y="794.8">25</text>
<text x="992.4" y="813.2">26</text><text x="1250.4" y="813.2">26</text>
<text x="992.4" y="831.7">27</text><text x="1250.4" y="831.7">27</text>
<text x="992.4" y="850.1">28</text><text x="1250.4" y="850.1">28</text>
<text x="992.4" y="868.5">29</text><text x="1250.4" y="868.5">29</text>
<text x="992.4" y="886.9">3<tspan font-family="'Liberation Sans',sans-serif" letter-spacing=".5">0</tspan></text><text x="1250.4" y="886.9">3<tspan font-family="'Liberation Sans',sans-serif" letter-spacing=".5">0</tspan></text>
</g>
<g font-size="12" fill="#111" stroke="#111" stroke-width=".12" text-anchor="middle">
<text x="1020.4" y="336.600">A</text><text x="1020.4" y="901.900">A</text>
<text x="1038.8" y="336.600">B</text><text x="1038.8" y="901.900">B</text>
<text x="1057.2" y="336.600">C</text><text x="1057.2" y="901.900">C</text>
<text x="1075.6" y="336.600">D</text><text x="1075.6" y="901.900">D</text>
<text x="1094.0" y="336.600">E</text><text x="1094.0" y="901.900">E</text>
<text x="1149.2" y="336.600">F</text><text x="1149.2" y="901.900">F</text>
<text x="1167.6" y="336.600">G</text><text x="1167.6" y="901.900">G</text>
<text x="1186.0" y="336.600">H</text><text x="1186.0" y="901.900">H</text>
<text x="1204.4" y="336.600">I</text><text x="1204.4" y="901.900">I</text>
<text x="1222.8" y="336.600">J</text><text x="1222.8" y="901.900">J</text>
</g>
</g><g id="esp" font-family="'Liberation Sans',sans-serif">
<rect x="488.600" y="406.700" width="267.500" height="482.700" fill="#fff"/>
<rect x="493" y="409.500" width="263" height="479.800" rx="13" fill="#050505"/>
<rect x="489.400" y="465.3" width="3" height="2.400" fill="#111"/>
<rect x="489.400" y="489.3" width="3" height="2.400" fill="#111"/>
<rect x="489.400" y="513.3" width="3" height="2.400" fill="#111"/>
<rect x="489.400" y="537.3" width="3" height="2.400" fill="#111"/>
<rect x="489.400" y="561.3" width="3" height="2.400" fill="#111"/>
<rect x="489.400" y="585.3" width="3" height="2.400" fill="#111"/>
<rect x="489.400" y="609.3" width="3" height="2.400" fill="#111"/>
<rect x="489.400" y="633.3" width="3" height="2.400" fill="#111"/>
<rect x="489.400" y="657.3" width="3" height="2.400" fill="#111"/>
<rect x="489.400" y="681.3" width="3" height="2.400" fill="#111"/>
<rect x="489.400" y="705.3" width="3" height="2.400" fill="#111"/>
<rect x="489.400" y="729.3" width="3" height="2.400" fill="#111"/>
<rect x="489.400" y="753.3" width="3" height="2.400" fill="#111"/>
<rect x="489.400" y="777.3" width="3" height="2.400" fill="#111"/>
<rect x="489.400" y="801.3" width="3" height="2.400" fill="#111"/>
<circle cx="514.7" cy="433.5" r="15.200" fill="#fff"/>
<circle cx="735.8" cy="434.2" r="15.200" fill="#fff"/>
<circle cx="514.9" cy="873.8" r="15.200" fill="#fff"/>
<circle cx="736.2" cy="873.8" r="15.200" fill="#fff"/>
<rect x="539" y="411" width="172.500" height="65" fill="#a3a599"/>
<rect x="539" y="414" width="170.300" height="62" fill="#060606"/>
<rect x="539" y="411" width="1.200" height="65" fill="#4a4b46"/>
<text x="620" y="470" font-size="8" fill="#ddd" text-anchor="middle">K</text>
<rect x="658" y="465" width="3" height="5" fill="#333"/><rect x="680" y="465" width="4" height="5" fill="#333"/>
<rect x="530.500" y="481.0" width="8" height="5.600" fill="#777"/><rect x="538.500" y="481.0" width="8" height="5.600" fill="#4e3d2a"/>
<rect x="710" y="481.0" width="8" height="5.600" fill="#777"/><rect x="701" y="481.0" width="9" height="5.600" fill="#4e3d2a"/>
<rect x="530.500" y="489.6" width="8" height="5.600" fill="#777"/><rect x="538.500" y="489.6" width="8" height="5.600" fill="#4e3d2a"/>
<rect x="710" y="489.6" width="8" height="5.600" fill="#777"/><rect x="701" y="489.6" width="9" height="5.600" fill="#4e3d2a"/>
<rect x="530.500" y="498.2" width="8" height="5.600" fill="#777"/><rect x="538.500" y="498.2" width="8" height="5.600" fill="#4e3d2a"/>
<rect x="710" y="498.2" width="8" height="5.600" fill="#777"/><rect x="701" y="498.2" width="9" height="5.600" fill="#4e3d2a"/>
<rect x="530.500" y="506.8" width="8" height="5.600" fill="#777"/><rect x="538.500" y="506.8" width="8" height="5.600" fill="#4e3d2a"/>
<rect x="710" y="506.8" width="8" height="5.600" fill="#777"/><rect x="701" y="506.8" width="9" height="5.600" fill="#4e3d2a"/>
<rect x="530.500" y="515.4" width="8" height="5.600" fill="#777"/><rect x="538.500" y="515.4" width="8" height="5.600" fill="#4e3d2a"/>
<rect x="710" y="515.4" width="8" height="5.600" fill="#777"/><rect x="701" y="515.4" width="9" height="5.600" fill="#4e3d2a"/>
<rect x="530.500" y="524.0" width="8" height="5.600" fill="#777"/><rect x="538.500" y="524.0" width="8" height="5.600" fill="#4e3d2a"/>
<rect x="710" y="524.0" width="8" height="5.600" fill="#777"/><rect x="701" y="524.0" width="9" height="5.600" fill="#4e3d2a"/>
<rect x="530.500" y="532.6" width="8" height="5.600" fill="#777"/><rect x="538.500" y="532.6" width="8" height="5.600" fill="#4e3d2a"/>
<rect x="710" y="532.6" width="8" height="5.600" fill="#777"/><rect x="701" y="532.6" width="9" height="5.600" fill="#4e3d2a"/>
<rect x="530.500" y="541.2" width="8" height="5.600" fill="#777"/><rect x="538.500" y="541.2" width="8" height="5.600" fill="#4e3d2a"/>
<rect x="710" y="541.2" width="8" height="5.600" fill="#777"/><rect x="701" y="541.2" width="9" height="5.600" fill="#4e3d2a"/>
<rect x="530.500" y="549.8" width="8" height="5.600" fill="#777"/><rect x="538.500" y="549.8" width="8" height="5.600" fill="#4e3d2a"/>
<rect x="710" y="549.8" width="8" height="5.600" fill="#777"/><rect x="701" y="549.8" width="9" height="5.600" fill="#4e3d2a"/>
<rect x="530.500" y="558.4" width="8" height="5.600" fill="#777"/><rect x="538.500" y="558.4" width="8" height="5.600" fill="#4e3d2a"/>
<rect x="710" y="558.4" width="8" height="5.600" fill="#777"/><rect x="701" y="558.4" width="9" height="5.600" fill="#4e3d2a"/>
<rect x="530.500" y="567.0" width="8" height="5.600" fill="#777"/><rect x="538.500" y="567.0" width="8" height="5.600" fill="#4e3d2a"/>
<rect x="710" y="567.0" width="8" height="5.600" fill="#777"/><rect x="701" y="567.0" width="9" height="5.600" fill="#4e3d2a"/>
<rect x="530.500" y="575.6" width="8" height="5.600" fill="#777"/><rect x="538.500" y="575.6" width="8" height="5.600" fill="#4e3d2a"/>
<rect x="710" y="575.6" width="8" height="5.600" fill="#777"/><rect x="701" y="575.6" width="9" height="5.600" fill="#4e3d2a"/>
<rect x="530.500" y="584.2" width="8" height="5.600" fill="#777"/><rect x="538.500" y="584.2" width="8" height="5.600" fill="#4e3d2a"/>
<rect x="710" y="584.2" width="8" height="5.600" fill="#777"/><rect x="701" y="584.2" width="9" height="5.600" fill="#4e3d2a"/>
<rect x="530.500" y="592.8" width="8" height="5.600" fill="#777"/><rect x="538.500" y="592.8" width="8" height="5.600" fill="#4e3d2a"/>
<rect x="710" y="592.8" width="8" height="5.600" fill="#777"/><rect x="701" y="592.8" width="9" height="5.600" fill="#4e3d2a"/>
<rect x="530.500" y="601.4" width="8" height="5.600" fill="#777"/><rect x="538.500" y="601.4" width="8" height="5.600" fill="#4e3d2a"/>
<rect x="710" y="601.4" width="8" height="5.600" fill="#777"/><rect x="701" y="601.4" width="9" height="5.600" fill="#4e3d2a"/>
<rect x="530.500" y="610.0" width="8" height="5.600" fill="#777"/><rect x="538.500" y="610.0" width="8" height="5.600" fill="#4e3d2a"/>
<rect x="710" y="610.0" width="8" height="5.600" fill="#777"/><rect x="701" y="610.0" width="9" height="5.600" fill="#4e3d2a"/>
<rect x="530.500" y="618.6" width="8" height="5.600" fill="#777"/><rect x="538.500" y="618.6" width="8" height="5.600" fill="#4e3d2a"/>
<rect x="710" y="618.6" width="8" height="5.600" fill="#777"/><rect x="701" y="618.6" width="9" height="5.600" fill="#4e3d2a"/>
<rect x="530.500" y="627.2" width="8" height="5.600" fill="#777"/><rect x="538.500" y="627.2" width="8" height="5.600" fill="#4e3d2a"/>
<rect x="710" y="627.2" width="8" height="5.600" fill="#777"/><rect x="701" y="627.2" width="9" height="5.600" fill="#4e3d2a"/>
<rect x="530.500" y="635.8" width="8" height="5.600" fill="#777"/><rect x="538.500" y="635.8" width="8" height="5.600" fill="#4e3d2a"/>
<rect x="710" y="635.8" width="8" height="5.600" fill="#777"/><rect x="701" y="635.8" width="9" height="5.600" fill="#4e3d2a"/>
<rect x="547" y="475.500" width="153" height="170" rx="3" fill="#6f6f6f"/>
<rect x="549.500" y="478" width="148" height="163.500" rx="2" fill="#353535"/>
<rect x="552" y="641" width="146.500" height="4" fill="#e8e8e8"/>
<circle cx="568.500" cy="621" r="5" fill="#0c0c0c" stroke="#777" stroke-width="1"/>
<ellipse cx="582" cy="521.500" rx="16.500" ry="12.500" fill="#6a6a6a" stroke="#aaa" stroke-width="1"/>
<text x="582" y="526" font-size="11" font-weight="bold" fill="#c8c8c8" text-anchor="middle" textLength="28" lengthAdjust="spacingAndGlyphs">WiFi</text>
<text x="600" y="526.500" font-size="9.500" font-weight="bold" fill="#b5b5b5" textLength="83" lengthAdjust="spacingAndGlyphs">ESP-WROOM-32</text>
<text x="623" y="557.500" font-size="30" fill="#b4b4b4" stroke="#b4b4b4" stroke-width="1.300" text-anchor="middle" textLength="30" lengthAdjust="spacingAndGlyphs">CE</text>
<circle cx="592" cy="570" r="12.500" fill="none" stroke="#c0c0c0" stroke-width="1.600"/><path d="M582 571 H597 L600 565 L603 571 M586 574 H600 M588 577 H598 M593 571 V580" stroke="#c0c0c0" stroke-width="1.300" fill="none"/>
<rect x="611" y="563.500" width="13" height="11.500" fill="none" stroke="#c0c0c0" stroke-width="1.200"/><text x="617.500" y="573" font-size="9.500" fill="#c0c0c0" text-anchor="middle">R</text>
<text x="631" y="574" font-size="8" font-weight="bold" fill="#bcbcbc" textLength="40" lengthAdjust="spacingAndGlyphs">211-161007</text>
<text x="579" y="591.500" font-size="7.500" fill="#b9b9b9" textLength="104" lengthAdjust="spacingAndGlyphs">FCC ID:2AC7Z-ESPWROOM32</text>
<path d="M540 648 V654 H562 M690 654 H711 V648" fill="none" stroke="#bdbdbd" stroke-width="1.200"/>
<rect x="566.3" y="654" width="6.400" height="10" fill="#3d3d3d"/><circle cx="569.5" cy="652.800" r="2.600" fill="#f2f2f2"/>
<rect x="578.4" y="654" width="6.400" height="10" fill="#3d3d3d"/><circle cx="581.6" cy="652.800" r="2.600" fill="#f2f2f2"/>
<rect x="590.5" y="654" width="6.400" height="10" fill="#3d3d3d"/><circle cx="593.7" cy="652.800" r="2.600" fill="#f2f2f2"/>
<rect x="602.6" y="654" width="6.400" height="10" fill="#3d3d3d"/><circle cx="605.8" cy="652.800" r="2.600" fill="#f2f2f2"/>
<rect x="614.7" y="654" width="6.400" height="10" fill="#3d3d3d"/><circle cx="617.9" cy="652.800" r="2.600" fill="#f2f2f2"/>
<rect x="626.8" y="654" width="6.400" height="10" fill="#3d3d3d"/><circle cx="630.0" cy="652.800" r="2.600" fill="#f2f2f2"/>
<rect x="638.9" y="654" width="6.400" height="10" fill="#3d3d3d"/><circle cx="642.1" cy="652.800" r="2.600" fill="#f2f2f2"/>
<rect x="651.0" y="654" width="6.400" height="10" fill="#3d3d3d"/><circle cx="654.2" cy="652.800" r="2.600" fill="#f2f2f2"/>
<rect x="663.1" y="654" width="6.400" height="10" fill="#3d3d3d"/><circle cx="666.3" cy="652.800" r="2.600" fill="#f2f2f2"/>
<rect x="675.2" y="654" width="6.400" height="10" fill="#3d3d3d"/><circle cx="678.4" cy="652.800" r="2.600" fill="#f2f2f2"/>
<circle cx="504" cy="465.0" r="6.300" fill="#cfcfca"/><circle cx="745" cy="465.0" r="6.300" fill="#cfcfca"/>
<circle cx="505.300" cy="466.8" r="5.600" fill="#4a4a48"/><circle cx="746.300" cy="466.8" r="5.600" fill="#4a4a48"/>
<circle cx="505.500" cy="467.7" r="4.900" fill="#8a8a8a"/><circle cx="746" cy="467.7" r="4.900" fill="#8a8a8a"/>
<circle cx="504" cy="489.0" r="6.300" fill="#cfcfca"/><circle cx="745" cy="489.0" r="6.300" fill="#cfcfca"/>
<circle cx="505.300" cy="490.8" r="5.600" fill="#4a4a48"/><circle cx="746.300" cy="490.8" r="5.600" fill="#4a4a48"/>
<circle cx="505.500" cy="491.7" r="4.900" fill="#8a8a8a"/><circle cx="746" cy="491.7" r="4.900" fill="#8a8a8a"/>
<circle cx="504" cy="513.0" r="6.300" fill="#cfcfca"/><circle cx="745" cy="513.0" r="6.300" fill="#cfcfca"/>
<circle cx="505.300" cy="514.8" r="5.600" fill="#4a4a48"/><circle cx="746.300" cy="514.8" r="5.600" fill="#4a4a48"/>
<circle cx="505.500" cy="515.7" r="4.900" fill="#8a8a8a"/><circle cx="746" cy="515.7" r="4.900" fill="#8a8a8a"/>
<circle cx="504" cy="537.0" r="6.300" fill="#cfcfca"/><circle cx="745" cy="537.0" r="6.300" fill="#cfcfca"/>
<circle cx="505.300" cy="538.8" r="5.600" fill="#4a4a48"/><circle cx="746.300" cy="538.8" r="5.600" fill="#4a4a48"/>
<circle cx="505.500" cy="539.7" r="4.900" fill="#8a8a8a"/><circle cx="746" cy="539.7" r="4.900" fill="#8a8a8a"/>
<circle cx="504" cy="561.0" r="6.300" fill="#cfcfca"/><circle cx="745" cy="561.0" r="6.300" fill="#cfcfca"/>
<circle cx="505.300" cy="562.8" r="5.600" fill="#4a4a48"/><circle cx="746.300" cy="562.8" r="5.600" fill="#4a4a48"/>
<circle cx="505.500" cy="563.7" r="4.900" fill="#8a8a8a"/><circle cx="746" cy="563.7" r="4.900" fill="#8a8a8a"/>
<circle cx="504" cy="585.0" r="6.300" fill="#cfcfca"/><circle cx="745" cy="585.0" r="6.300" fill="#cfcfca"/>
<circle cx="505.300" cy="586.8" r="5.600" fill="#4a4a48"/><circle cx="746.300" cy="586.8" r="5.600" fill="#4a4a48"/>
<circle cx="505.500" cy="587.7" r="4.900" fill="#8a8a8a"/><circle cx="746" cy="587.7" r="4.900" fill="#8a8a8a"/>
<circle cx="504" cy="609.0" r="6.300" fill="#cfcfca"/><circle cx="745" cy="609.0" r="6.300" fill="#cfcfca"/>
<circle cx="505.300" cy="610.8" r="5.600" fill="#4a4a48"/><circle cx="746.300" cy="610.8" r="5.600" fill="#4a4a48"/>
<circle cx="505.500" cy="611.7" r="4.900" fill="#8a8a8a"/><circle cx="746" cy="611.7" r="4.900" fill="#8a8a8a"/>
<circle cx="504" cy="633.0" r="6.300" fill="#cfcfca"/><circle cx="745" cy="633.0" r="6.300" fill="#cfcfca"/>
<circle cx="505.300" cy="634.8" r="5.600" fill="#4a4a48"/><circle cx="746.300" cy="634.8" r="5.600" fill="#4a4a48"/>
<circle cx="505.500" cy="635.7" r="4.900" fill="#8a8a8a"/><circle cx="746" cy="635.7" r="4.900" fill="#8a8a8a"/>
<circle cx="504" cy="657.0" r="6.300" fill="#cfcfca"/><circle cx="745" cy="657.0" r="6.300" fill="#cfcfca"/>
<circle cx="505.300" cy="658.8" r="5.600" fill="#4a4a48"/><circle cx="746.300" cy="658.8" r="5.600" fill="#4a4a48"/>
<circle cx="505.500" cy="659.7" r="4.900" fill="#8a8a8a"/><circle cx="746" cy="659.7" r="4.900" fill="#8a8a8a"/>
<circle cx="504" cy="681.0" r="6.300" fill="#cfcfca"/><circle cx="745" cy="681.0" r="6.300" fill="#cfcfca"/>
<circle cx="505.300" cy="682.8" r="5.600" fill="#4a4a48"/><circle cx="746.300" cy="682.8" r="5.600" fill="#4a4a48"/>
<circle cx="505.500" cy="683.7" r="4.900" fill="#8a8a8a"/><circle cx="746" cy="683.7" r="4.900" fill="#8a8a8a"/>
<circle cx="504" cy="705.0" r="6.300" fill="#cfcfca"/><circle cx="745" cy="705.0" r="6.300" fill="#cfcfca"/>
<circle cx="505.300" cy="706.8" r="5.600" fill="#4a4a48"/><circle cx="746.300" cy="706.8" r="5.600" fill="#4a4a48"/>
<circle cx="505.500" cy="707.7" r="4.900" fill="#8a8a8a"/><circle cx="746" cy="707.7" r="4.900" fill="#8a8a8a"/>
<circle cx="504" cy="729.0" r="6.300" fill="#cfcfca"/><circle cx="745" cy="729.0" r="6.300" fill="#cfcfca"/>
<circle cx="505.300" cy="730.8" r="5.600" fill="#4a4a48"/><circle cx="746.300" cy="730.8" r="5.600" fill="#4a4a48"/>
<circle cx="505.500" cy="731.7" r="4.900" fill="#8a8a8a"/><circle cx="746" cy="731.7" r="4.900" fill="#8a8a8a"/>
<circle cx="504" cy="753.0" r="6.300" fill="#cfcfca"/><circle cx="745" cy="753.0" r="6.300" fill="#cfcfca"/>
<circle cx="505.300" cy="754.8" r="5.600" fill="#4a4a48"/><circle cx="746.300" cy="754.8" r="5.600" fill="#4a4a48"/>
<circle cx="505.500" cy="755.7" r="4.900" fill="#8a8a8a"/><circle cx="746" cy="755.7" r="4.900" fill="#8a8a8a"/>
<circle cx="504" cy="777.0" r="6.300" fill="#cfcfca"/><circle cx="745" cy="777.0" r="6.300" fill="#cfcfca"/>
<circle cx="505.300" cy="778.8" r="5.600" fill="#4a4a48"/><circle cx="746.300" cy="778.8" r="5.600" fill="#4a4a48"/>
<circle cx="505.500" cy="779.7" r="4.900" fill="#8a8a8a"/><circle cx="746" cy="779.7" r="4.900" fill="#8a8a8a"/>
<rect x="498" y="794.5" width="15" height="16" fill="#d8d8d8"/><rect x="738" y="794.5" width="15" height="16" fill="#d8d8d8"/>
<rect x="500.500" y="797.0" width="10" height="11" fill="#2a2a2a"/><rect x="740.500" y="797.0" width="10" height="11" fill="#2a2a2a"/>
<circle cx="505.500" cy="803.7" r="4.900" fill="#8a8a8a"/><circle cx="746" cy="803.7" r="4.900" fill="#8a8a8a"/>
<g font-size="13.300" font-weight="bold" fill="#fff" text-anchor="middle">
<text transform="translate(528.400 467.0) rotate(-90)" textLength="16.5" lengthAdjust="spacingAndGlyphs">EN</text>
<text transform="translate(733.300 467.0) rotate(-90)" textLength="22.5" lengthAdjust="spacingAndGlyphs">D23</text>
<text transform="translate(528.400 491.0) rotate(-90)" textLength="16.5" lengthAdjust="spacingAndGlyphs">UP</text>
<text transform="translate(733.300 491.0) rotate(-90)" textLength="22.5" lengthAdjust="spacingAndGlyphs">D22</text>
<text transform="translate(528.400 515.0) rotate(-90)" textLength="16.5" lengthAdjust="spacingAndGlyphs">UN</text>
<text transform="translate(733.300 515.0) rotate(-90)" textLength="22.5" lengthAdjust="spacingAndGlyphs">TX0</text>
<text transform="translate(528.400 539.0) rotate(-90)" textLength="22.5" lengthAdjust="spacingAndGlyphs">D34</text>
<text transform="translate(733.300 539.0) rotate(-90)" textLength="22.5" lengthAdjust="spacingAndGlyphs">RX0</text>
<text transform="translate(528.400 563.0) rotate(-90)" textLength="22.5" lengthAdjust="spacingAndGlyphs">D35</text>
<text transform="translate(733.300 563.0) rotate(-90)" textLength="22.5" lengthAdjust="spacingAndGlyphs">D21</text>
<text transform="translate(528.400 587.0) rotate(-90)" textLength="22.5" lengthAdjust="spacingAndGlyphs">D32</text>
<text transform="translate(733.300 587.0) rotate(-90)" textLength="22.5" lengthAdjust="spacingAndGlyphs">D19</text>
<text transform="translate(528.400 611.0) rotate(-90)" textLength="22.5" lengthAdjust="spacingAndGlyphs">D33</text>
<text transform="translate(733.300 611.0) rotate(-90)" textLength="22.5" lengthAdjust="spacingAndGlyphs">D18</text>
<text transform="translate(528.400 635.0) rotate(-90)" textLength="22.5" lengthAdjust="spacingAndGlyphs">D25</text>
<text transform="translate(733.300 635.0) rotate(-90)" textLength="16.5" lengthAdjust="spacingAndGlyphs">D5</text>
<text transform="translate(528.400 659.0) rotate(-90)" textLength="22.5" lengthAdjust="spacingAndGlyphs">D26</text>
<text transform="translate(733.300 659.0) rotate(-90)" textLength="22.5" lengthAdjust="spacingAndGlyphs">TX2</text>
<text transform="translate(528.400 683.0) rotate(-90)" textLength="22.5" lengthAdjust="spacingAndGlyphs">D27</text>
<text transform="translate(733.300 683.0) rotate(-90)" textLength="22.5" lengthAdjust="spacingAndGlyphs">RX2</text>
<text transform="translate(528.400 707.0) rotate(-90)" textLength="22.5" lengthAdjust="spacingAndGlyphs">D14</text>
<text transform="translate(733.300 707.0) rotate(-90)" textLength="16.5" lengthAdjust="spacingAndGlyphs">D4</text>
<text transform="translate(528.400 731.0) rotate(-90)" textLength="22.5" lengthAdjust="spacingAndGlyphs">D12</text>
<text transform="translate(733.300 731.0) rotate(-90)" textLength="16.5" lengthAdjust="spacingAndGlyphs">D2</text>
<text transform="translate(528.400 755.0) rotate(-90)" textLength="22.5" lengthAdjust="spacingAndGlyphs">D13</text>
<text transform="translate(733.300 755.0) rotate(-90)" textLength="22.5" lengthAdjust="spacingAndGlyphs">D15</text>
<text transform="translate(528.400 779.0) rotate(-90)" textLength="22.5" lengthAdjust="spacingAndGlyphs">GND</text>
<text transform="translate(733.300 779.0) rotate(-90)" textLength="22.5" lengthAdjust="spacingAndGlyphs">GND</text>
<text transform="translate(528.400 803.0) rotate(-90)" textLength="22.5" lengthAdjust="spacingAndGlyphs">VIN</text>
<text transform="translate(733.300 803.0) rotate(-90)" textLength="22.5" lengthAdjust="spacingAndGlyphs">3V3</text>
</g>
<rect x="540.5" y="673.5" width="32" height="13" fill="none" stroke="#f0f0f0" stroke-width="1.700"/>
<rect x="550.1" y="676.0" width="12.8" height="8" fill="#7a4a30"/>
<rect x="540.5" y="693" width="32" height="13" fill="none" stroke="#f0f0f0" stroke-width="1.700"/>
<rect x="550.1" y="695.5" width="12.8" height="8" fill="#8a4a38"/>
<rect x="683" y="673.5" width="32" height="13" fill="none" stroke="#f0f0f0" stroke-width="1.700"/>
<rect x="692.6" y="676.0" width="12.8" height="8" fill="#777"/>
<rect x="683" y="693" width="32" height="13" fill="none" stroke="#f0f0f0" stroke-width="1.700"/>
<rect x="692.6" y="695.5" width="12.8" height="8" fill="#777"/>
<rect x="577" y="674" width="101" height="32.500" fill="none" stroke="#f0f0f0" stroke-width="1.800"/>
<rect x="577.0" y="674" width="14.400" height="32.500" fill="none" stroke="#f0f0f0" stroke-width="1.700"/>
<rect x="581.0" y="679" width="6.500" height="23" fill="#f4f0e6"/><rect x="581.0" y="678" width="6.500" height="5" fill="#cfcfc8"/><rect x="581.0" y="698" width="6.500" height="5" fill="#cfcfc8"/>
<rect x="591.4" y="674" width="14.400" height="32.500" fill="none" stroke="#f0f0f0" stroke-width="1.700"/>
<rect x="595.4" y="679" width="6.500" height="23" fill="#555"/><rect x="595.4" y="678" width="6.500" height="5" fill="#cfcfc8"/><rect x="595.4" y="698" width="6.500" height="5" fill="#cfcfc8"/>
<rect x="605.9" y="674" width="14.400" height="32.500" fill="none" stroke="#f0f0f0" stroke-width="1.700"/>
<rect x="609.9" y="679" width="6.500" height="23" fill="#555"/><rect x="609.9" y="678" width="6.500" height="5" fill="#cfcfc8"/><rect x="609.9" y="698" width="6.500" height="5" fill="#cfcfc8"/>
<rect x="620.3" y="674" width="14.400" height="32.500" fill="none" stroke="#f0f0f0" stroke-width="1.700"/>
<rect x="624.3" y="679" width="6.500" height="23" fill="#555"/><rect x="624.3" y="678" width="6.500" height="5" fill="#cfcfc8"/><rect x="624.3" y="698" width="6.500" height="5" fill="#cfcfc8"/>
<rect x="634.7" y="674" width="14.400" height="32.500" fill="none" stroke="#f0f0f0" stroke-width="1.700"/>
<rect x="638.7" y="679" width="6.500" height="23" fill="#555"/><rect x="638.7" y="678" width="6.500" height="5" fill="#cfcfc8"/><rect x="638.7" y="698" width="6.500" height="5" fill="#cfcfc8"/>
<rect x="649.1" y="674" width="14.400" height="32.500" fill="none" stroke="#f0f0f0" stroke-width="1.700"/>
<rect x="653.1" y="679" width="6.500" height="23" fill="#555"/><rect x="653.1" y="678" width="6.500" height="5" fill="#cfcfc8"/><rect x="653.1" y="698" width="6.500" height="5" fill="#cfcfc8"/>
<rect x="663.6" y="674" width="14.400" height="32.500" fill="none" stroke="#f0f0f0" stroke-width="1.700"/>
<rect x="667.6" y="679" width="6.500" height="23" fill="#f4f0e6"/><rect x="667.6" y="678" width="6.500" height="5" fill="#cfcfc8"/><rect x="667.6" y="698" width="6.500" height="5" fill="#cfcfc8"/>
<rect x="541.5" y="717" width="48" height="22" fill="none" stroke="#f0f0f0" stroke-width="1.700"/>
<rect x="545.500" y="720" width="36" height="17" rx="3" fill="#e8a33a"/><rect x="545.500" y="720" width="6" height="17" rx="2" fill="#d9d4c8"/><rect x="551" y="720" width="4" height="17" fill="#d9731f"/>
<text x="567" y="728" font-size="5.500" fill="#e0621a" text-anchor="middle" font-weight="bold">106C</text><text x="567" y="734.500" font-size="5.500" fill="#e0621a" text-anchor="middle" font-weight="bold">S1BN3</text>
<rect x="597.5" y="712" width="12" height="31" fill="none" stroke="#f0f0f0" stroke-width="1.700"/>
<rect x="600.500" y="716" width="6" height="7" fill="#ddd"/><rect x="600.500" y="732" width="6" height="7" fill="#ddd"/>
<rect x="702" y="711" width="12" height="31" fill="none" stroke="#f0f0f0" stroke-width="1.700"/>
<rect x="705" y="715" width="6" height="7" fill="#ddd"/><rect x="705" y="731" width="6" height="7" fill="#ddd"/>
<path d="M613 714 L621 720 M621 714 L613 720" stroke="#e6e6e6" stroke-width="2.200"/>
<path d="M613 732 L621 738 M621 732 L613 738" stroke="#e6e6e6" stroke-width="2.200"/>
<path d="M688 714 L696 720 M696 714 L688 720" stroke="#e6e6e6" stroke-width="2.200"/>
<path d="M688 732 L696 738 M696 732 L688 738" stroke="#e6e6e6" stroke-width="2.200"/>
<path d="M635 724 L643 730 M643 724 L635 730" stroke="#e6e6e6" stroke-width="2.200"/>
<path d="M664 724 L672 730 M672 724 L664 730" stroke="#e6e6e6" stroke-width="2.200"/>
<rect x="543" y="761" width="18" height="35" fill="#d9d4cc"/><rect x="547" y="763" width="5" height="31" fill="#f5f3ee"/>
<rect x="595" y="748" width="22" height="13" rx="3" fill="#b9b9b9"/><rect x="602" y="750" width="9" height="9" fill="#444"/>
<rect x="595" y="770" width="22" height="13" rx="3" fill="#b9b9b9"/><rect x="602" y="772" width="9" height="9" fill="#444"/>
<rect x="595" y="792" width="22" height="13" rx="3" fill="#b9b9b9"/><rect x="602" y="794" width="9" height="9" fill="#444"/>
<path d="M565 746 H597 M565 806 H592" stroke="#bbb" stroke-width="1.200"/>
<rect x="657" y="758" width="48" height="50" fill="#141414"/>
<rect x="664.0" y="751" width="2" height="5.500" fill="#e6e6e6"/><rect x="664.0" y="804.500" width="2" height="5.500" fill="#e6e6e6"/>
<rect x="668.2" y="751" width="2" height="5.500" fill="#e6e6e6"/><rect x="668.2" y="804.500" width="2" height="5.500" fill="#e6e6e6"/>
<rect x="672.4" y="751" width="2" height="5.500" fill="#e6e6e6"/><rect x="672.4" y="804.500" width="2" height="5.500" fill="#e6e6e6"/>
<rect x="676.6" y="751" width="2" height="5.500" fill="#e6e6e6"/><rect x="676.6" y="804.500" width="2" height="5.500" fill="#e6e6e6"/>
<rect x="680.8" y="751" width="2" height="5.500" fill="#e6e6e6"/><rect x="680.8" y="804.500" width="2" height="5.500" fill="#e6e6e6"/>
<rect x="685.0" y="751" width="2" height="5.500" fill="#e6e6e6"/><rect x="685.0" y="804.500" width="2" height="5.500" fill="#e6e6e6"/>
<rect x="689.2" y="751" width="2" height="5.500" fill="#e6e6e6"/><rect x="689.2" y="804.500" width="2" height="5.500" fill="#e6e6e6"/>
<rect x="693.4" y="751" width="2" height="5.500" fill="#e6e6e6"/><rect x="693.4" y="804.500" width="2" height="5.500" fill="#e6e6e6"/>
<rect x="697.6" y="751" width="2" height="5.500" fill="#e6e6e6"/><rect x="697.6" y="804.500" width="2" height="5.500" fill="#e6e6e6"/>
<rect x="653" y="764.0" width="4" height="2" fill="#cfcfcf"/>
<rect x="653" y="769.8" width="4" height="2" fill="#cfcfcf"/>
<rect x="653" y="775.6" width="4" height="2" fill="#cfcfcf"/>
<rect x="653" y="781.4" width="4" height="2" fill="#cfcfcf"/>
<rect x="653" y="787.2" width="4" height="2" fill="#cfcfcf"/>
<rect x="653" y="793.0" width="4" height="2" fill="#cfcfcf"/>
<rect x="653" y="798.8" width="4" height="2" fill="#cfcfcf"/>
<path d="M700 756 H705 V762 M705 797 V803" fill="none" stroke="#e6e6e6" stroke-width="1.300"/><circle cx="656" cy="754" r="1.600" fill="#eee"/>
<g font-size="6.500" fill="#3c3c3c"><text x="668" y="770">SILABS</text><text x="668" y="780">CP2102</text><text x="668" y="789">DCL00X</text><text x="669" y="798">1642+</text></g>
<rect x="540" y="814.5" width="32" height="13" fill="none" stroke="#f0f0f0" stroke-width="1.700"/>
<rect x="549.6" y="817.0" width="12.8" height="8" fill="#777"/>
<rect x="575" y="814.5" width="30" height="13" fill="none" stroke="#f0f0f0" stroke-width="1.700"/>
<rect x="608" y="814.5" width="30" height="13" fill="none" stroke="#f0f0f0" stroke-width="1.700"/>
<rect x="617.0" y="817.0" width="12.0" height="8" fill="#a88858"/>
<rect x="650" y="814.5" width="32" height="13" fill="none" stroke="#f0f0f0" stroke-width="1.700"/>
<rect x="659.6" y="817.0" width="12.8" height="8" fill="#866"/>
<rect x="685" y="814.5" width="31" height="13" fill="none" stroke="#f0f0f0" stroke-width="1.700"/>
<rect x="694.3" y="817.0" width="12.4" height="8" fill="#777"/>
<rect x="527" y="820" width="7" height="7" fill="#aaa"/><circle cx="532" cy="832" r="4" fill="#999"/>
<rect x="545" y="834" width="10" height="10" fill="#c9c7c0"/><rect x="545" y="880" width="10" height="9.300" fill="#e4e2dc"/>
<rect x="536.5" y="843" width="27" height="39" fill="none" stroke="#e6e6e6" stroke-width="1.200"/>
<rect x="539" y="845" width="22" height="35.500" fill="#76716b"/><ellipse cx="550" cy="863" rx="7" ry="10" fill="#3c3a3a"/>
<rect x="695.5" y="834" width="10" height="10" fill="#c9c7c0"/><rect x="695.5" y="880" width="10" height="9.300" fill="#e4e2dc"/>
<rect x="687.0" y="843" width="27" height="39" fill="none" stroke="#e6e6e6" stroke-width="1.200"/>
<rect x="689.5" y="845" width="22" height="35.500" fill="#76716b"/><ellipse cx="700.5" cy="863" rx="7" ry="10" fill="#3c3a3a"/>
<g font-size="13" font-weight="bold" fill="#fff" text-anchor="middle"><text transform="translate(578.500 864.500) rotate(-90)">EN</text><text transform="translate(683 863) rotate(-90)" textLength="36" lengthAdjust="spacingAndGlyphs">BOOT</text></g>
<rect x="611.0" y="836" width="2" height="9" fill="#ddd"/>
<rect x="617.2" y="836" width="2" height="9" fill="#ddd"/>
<rect x="623.4" y="836" width="2" height="9" fill="#ddd"/>
<rect x="629.6" y="836" width="2" height="9" fill="#ddd"/>
<rect x="635.8" y="836" width="2" height="9" fill="#ddd"/>
<path d="M590.500 889.300 V852 L598 845 H653 L660.500 852 V889.300 Z" fill="#a9a8a0"/>
<path d="M608 852 H644 V849 H608 Z" fill="#5e5e58"/><rect x="600" y="846" width="6" height="9" fill="#555"/><rect x="645" y="846" width="6" height="9" fill="#555"/>
<rect x="600" y="869" width="5" height="13" fill="#151515"/><rect x="645" y="869" width="5" height="13" fill="#151515"/><rect x="598" y="879" width="9" height="3" fill="#151515"/><rect x="643" y="879" width="9" height="3" fill="#151515"/>
<path d="M596 889.300 L600 884 H651 L655 889.300 Z" fill="#c9c8c0"/>
</g><g id="wires" fill="none" stroke-width="3.900" stroke-linecap="round" stroke-linejoin="round">
<!-- resistor 1 -->
<path d="M965.200 588.400 L990 562.500 M1033 562.500 L1057.200 588.400" stroke="#000" stroke-width="3.400"/>
<rect x="989" y="558" width="44.700" height="9.800" rx="3.500" fill="#e5b681" stroke="none"/>
<g stroke="none"><rect x="993.600" y="558.600" width="4.200" height="8.600" fill="#e8432b"/><rect x="1001" y="558.600" width="3.600" height="8.600" fill="#0a0a0a"/><rect x="1007" y="558.600" width="3.700" height="8.600" fill="#0a0a0a"/><rect x="1013" y="558.600" width="3.200" height="8.600" fill="#0a0a0a"/><rect x="1019" y="558.600" width="3.600" height="8.600" fill="#b8862b"/></g>
<!-- resistor 2 -->
<path d="M965.200 699 L988.500 670.500 M1031.500 670.500 L1057.200 699" stroke="#000" stroke-width="3.400"/>
<rect x="987.500" y="665.600" width="44.400" height="9.600" rx="3.500" fill="#e5b681" stroke="none"/>
<g stroke="none"><rect x="992.500" y="666.200" width="3.800" height="8.400" fill="#0a0a0a"/><rect x="998.700" y="666.200" width="3.800" height="8.400" fill="#8b4a1c"/><rect x="1004.800" y="666.200" width="3.900" height="8.400" fill="#0a0a0a"/><rect x="1010.800" y="666.200" width="4" height="8.400" fill="#e8432b"/><rect x="1017" y="666.200" width="3.600" height="8.400" fill="#b8862b"/></g>
<!-- LED -->
<path d="M1078 587.800 H1098 M1075.500 606.500 L1084.600 598 H1098" stroke="#8e8e8e" stroke-width="5.200" stroke-linecap="butt" stroke-linejoin="miter"/>
<path d="M1104 579.800 H1124.400 A14.600 14.600 0 0 1 1124.400 609 H1112 C1100 609 1095 603 1095 596 V589 C1095 583 1098 579.800 1104 579.800 Z" fill="#e31c1c" stroke="none"/>
<path d="M1106 580.800 H1124.400 A13.200 13.200 0 0 1 1124.400 607.200 H1110 C1102 607.200 1098.200 602 1098.200 596 V589 C1098.200 584 1101 580.800 1106 580.800 Z" fill="#e63c3c" stroke="none"/>
<path d="M1114.200 587.300 H1122 V602.800 H1108.600 V600.500 H1114.200 Z" fill="#c22525" stroke="none"/>
<path d="M1114.500 592.500 L1121.800 600.500" stroke="#e63c3c" stroke-width="1"/>
<path d="M1102.500 585 H1127 C1130.500 585 1133 587 1134.500 589.800" stroke="#f3a2a2" stroke-width="3" stroke-linecap="butt"/>
<path d="M1134.800 597.500 L1132.300 601.500" stroke="#f3a2a2" stroke-width="2.200"/>
<path d="M1099.600 586 C1099 590 1099 596 1100.300 600.500" stroke="#f08b8b" stroke-width="1.100"/>
<!-- button -->
<rect x="1099" y="694.800" width="45.400" height="45" fill="#9e9e9e" stroke="none"/>
<g fill="#0b0b0b" stroke="none"><circle cx="1105.600" cy="700.800" r="3.900"/><circle cx="1137.600" cy="700.800" r="3.900"/><circle cx="1105.600" cy="733.100" r="3.900"/><circle cx="1137.600" cy="733.100" r="3.900"/></g>
<circle cx="1121.900" cy="716.900" r="12.600" fill="#795548" stroke="#2b2b2b" stroke-width="1.200"/>
<!-- wires -->
<path d="M504.500 780 H480 A12 12 0 0 1 468 768 V397.500 A12 12 0 0 1 480 385.500 H889.300 A12 12 0 0 1 901.300 397.500 V576.600 A12 12 0 0 0 913.300 588.600 H947" stroke="#ff0000"/>
<path d="M744.500 707.500 H752.500 A10 10 0 0 0 762.500 697.500 V616.700 A10 10 0 0 1 772.500 606.700 H1057.200" stroke="#ff00a0"/>
<path d="M743.700 780 H762 A10 10 0 0 0 772 770 V708.800 A10 10 0 0 1 782 698.800 H947" stroke="#ff0000"/>
<path d="M744.500 734.500 H774 A7 7 0 0 0 781 727.500 V724.400 A7 7 0 0 1 788 717.400 H1060 A15.600 15.600 0 0 0 1075.600 701.800 V699" stroke="#5858ff"/>
<path d="M743.500 802 H769 A12 12 0 0 0 781 790 V748 A12 12 0 0 1 793 736 H1075.600" stroke="#a5553f"/>
<!-- dots -->
<g stroke="none">
<circle cx="504.500" cy="780" r="4.800" fill="#ff0000"/><circle cx="947" cy="588.500" r="4.800" fill="#ff0000"/><circle cx="743.700" cy="780" r="4.800" fill="#ff0000"/><circle cx="947" cy="699" r="4.800" fill="#ff0000"/>
<circle cx="744.500" cy="707.500" r="4.800" fill="#ff00a0"/><circle cx="1057.200" cy="606.600" r="4.800" fill="#ff00a0"/>
<circle cx="744.500" cy="734.500" r="4.800" fill="#5858ff"/><circle cx="1075.600" cy="699" r="4.800" fill="#5858ff"/>
<circle cx="743.500" cy="802" r="4.800" fill="#a5553f"/><circle cx="1075.600" cy="735.700" r="4.800" fill="#a5553f"/>
<g fill="#0a1fe0"><circle cx="965.200" cy="588.400" r="4.800"/><circle cx="1057.200" cy="588.400" r="4.800"/><circle cx="1075.500" cy="588.400" r="4.800"/><circle cx="1075.500" cy="606.500" r="4.800"/><circle cx="965.200" cy="699" r="4.800"/><circle cx="1057.200" cy="699" r="4.800"/><circle cx="1094" cy="699" r="4.800"/><circle cx="1149.400" cy="699" r="4.800"/><circle cx="1094" cy="735.700" r="4.800"/><circle cx="1149.400" cy="735.700" r="4.800"/></g>
</g>
</g>
<g font-size="16.200" fill="#3a9ae0"><text x="983.500" y="548">2<tspan font-family="'Liberation Sans',sans-serif" letter-spacing=".72">00</tspan> Ω</text><text x="977.500" y="655.300">1<tspan font-family="'Liberation Sans',sans-serif" letter-spacing=".72">0</tspan>.<tspan font-family="'Liberation Sans',sans-serif" letter-spacing=".72">0</tspan> Ω</text></g>
<!-- canvas toolbar -->
<defs><filter id="sh" x="-40%" y="-40%" width="180%" height="190%"><feGaussianBlur in="SourceAlpha" stdDeviation="3"/><feOffset dy="3"/><feComponentTransfer><feFuncA type="linear" slope=".32"/></feComponentTransfer><feMerge><feMergeNode/><feMergeNode in="SourceGraphic"/></feMerge></filter></defs>
<circle cx="1310" cy="230" r="25" fill="#4caf50" filter="url(#sh)"/>
<path d="M1304.300 220.800 V239 L1319 229.900 Z" fill="#fff"/>
<g fill="#3f51b5">
<g transform="translate(1375 215) scale(1.25)"><path d="M2.500 4v3h5v12h3V7h5V4h-13zm19 5h-9v3h3v7h3v-7h3V9z"/></g>
<g transform="translate(1435 215) scale(1.25)"><path d="M19 15.180V7c0-2.210-1.790-4-4-4s-4 1.790-4 4v10c0 1.100-.9 2-2 2s-2-.9-2-2V8.820C8.160 8.400 9 7.300 9 6c0-1.660-1.340-3-3-3S3 4.340 3 6c0 1.300.84 2.400 2 2.820V17c0 2.210 1.790 4 4 4s4-1.790 4-4V7c0-1.100.9-2 2-2s2 .9 2 2v8.180c-1.160.41-2 1.510-2 2.820 0 1.660 1.340 3 3 3s3-1.340 3-3c0-1.300-.84-2.400-2-2.820z"/></g>
<g transform="translate(1495 215) scale(1.25)"><path d="M20 2H4c-1.100 0-2 .9-2 2v16c0 1.100.9 2 2 2h16c1.100 0 2-.9 2-2V4c0-1.100-.9-2-2-2zm0 9h-7V4h7v7zm-9-7v7H4V4h7zm-7 9h7v7H4v-7zm9 7v-7h7v7h-7z"/></g>
<g transform="translate(1555 215) scale(1.25)"><path d="M7.110 8.530 5.700 7.110C4.800 8.270 4.240 9.610 4.070 11h2.020c.14-.87.490-1.720 1.020-2.470zM6.090 13H4.070c.17 1.390.72 2.730 1.620 3.890l1.410-1.420c-.52-.75-.87-1.590-1.010-2.470zm1.010 5.320c1.160.9 2.510 1.440 3.900 1.610V17.900c-.87-.15-1.710-.49-2.460-1.030L7.100 18.320zM13 4.070V1L8.450 5.550 13 10V6.090c2.840.48 5 2.940 5 5.910s-2.160 5.430-5 5.910v2.020c3.950-.49 7-3.850 7-7.930s-3.050-7.440-7-7.930z"/></g>
<g transform="translate(1615 215) scale(1.25)"><path d="M15.550 5.550 11 1v3.070C7.060 4.560 4 7.920 4 12s3.050 7.440 7 7.930v-2.020c-2.840-.48-5-2.940-5-5.910s2.160-5.430 5-5.910V10l4.550-4.450zM19.930 11c-.17-1.390-.72-2.730-1.620-3.890l-1.420 1.420c.54.75.88 1.600 1.020 2.470h2.020zM13 17.900v2.020c1.390-.17 2.740-.71 3.900-1.610l-1.440-1.440c-.75.54-1.590.89-2.460 1.030zm3.890-2.420 1.420 1.410c.9-1.160 1.450-2.500 1.620-3.890h-2.020c-.14.870-.48 1.720-1.020 2.480z"/></g>
<g transform="translate(1675 215) scale(1.25)"><path d="M17 4h3c1.100 0 2 .9 2 2v2h-2V6h-3V4zM4 8V6h3V4H4c-1.100 0-2 .9-2 2v2h2zm16 8v2h-3v2h3c1.100 0 2-.9 2-2v-2h-2zM7 18H4v-2H2v2c0 1.100.9 2 2 2h3v-2zM18 8H6v8h12V8z"/></g>
<g transform="translate(1735 215) scale(1.25)"><path d="M15.500 14h-.79l-.28-.27C15.410 12.590 16 11.110 16 9.500 16 5.910 13.090 3 9.500 3S3 5.910 3 9.500 5.910 16 9.500 16c1.610 0 3.090-.59 4.230-1.570l.27.280v.79l5 4.990L20.490 19l-4.990-5zm-6 0C7.010 14 5 11.990 5 9.500S7.010 5 9.500 5 14 7.010 14 9.500 11.990 14 9.500 14zM7 9h5v1H7z"/></g>
<g transform="translate(1795 215) scale(1.25)"><path d="M15.500 14h-.79l-.28-.27C15.410 12.590 16 11.110 16 9.500 16 5.910 13.090 3 9.500 3S3 5.910 3 9.500 5.910 16 9.500 16c1.610 0 3.090-.59 4.230-1.570l.27.280v.79l5 4.990L20.490 19l-4.990-5zm-6 0C7.010 14 5 11.990 5 9.500S7.010 5 9.500 5 14 7.010 14 9.500 11.990 14 9.500 14zm2.500-4h-2v2H9v-2H7V9h2V7h1v2h2v1z"/></g>
<g transform="translate(1855 215) scale(1.25)"><path d="M6 19c0 1.100.9 2 2 2h8c1.100 0 2-.9 2-2V7H6v12zM19 4h-3.500l-1-1h-5l-1 1H5v2h14V4z"/></g>
</g>
<!-- help -->
<circle cx="1859" cy="960" r="24" fill="#3f51b5"/>
<text x="1858.700" y="970.800" font-family="'Liberation Sans',sans-serif" font-size="30.500" fill="#fff" stroke="#fff" stroke-width=".9" text-anchor="middle">?</text>
</svg>
<div id="taskbar"></div>
<svg class="abs" style="left:0;top:1021px" width="1920" height="59" viewBox="0 1021 1920 59" font-family="'Liberation Sans',sans-serif">
<defs>
<linearGradient id="gw" x1="0" y1="0" x2="1" y2="1"><stop offset="0" stop-color="#56c8ff"/><stop offset="1" stop-color="#0a74d6"/></linearGradient>
<linearGradient id="gcl" x1="0" y1="0" x2="0" y2="1"><stop offset="0" stop-color="#a9c8f5"/><stop offset=".45" stop-color="#cfe0f8"/><stop offset=".82" stop-color="#c6d9f6"/><stop offset="1" stop-color="#7fa6e8"/></linearGradient>
<linearGradient id="gst" x1="0" y1="0" x2="0" y2="1"><stop offset="0" stop-color="#1c5fa8"/><stop offset="1" stop-color="#1a3c72"/></linearGradient>
<linearGradient id="gma" x1="0" y1="0" x2="1" y2="1"><stop offset="0" stop-color="#2a86f5"/><stop offset="1" stop-color="#0f5ad8"/></linearGradient>
<linearGradient id="gae" x1="0" y1="0" x2="1" y2="0"><stop offset="0" stop-color="#b14cff"/><stop offset=".35" stop-color="#ff3d77"/><stop offset=".65" stop-color="#ffb02e"/><stop offset="1" stop-color="#3bd16f"/></linearGradient>
<linearGradient id="gfo" x1="0" y1="0" x2="0" y2="1"><stop offset="0" stop-color="#ffd764"/><stop offset="1" stop-color="#f7b82a"/></linearGradient>
<linearGradient id="gwd" x1="0" y1="0" x2="0" y2="1"><stop offset="0" stop-color="#4cc3ff"/><stop offset=".5" stop-color="#2f7ff0"/><stop offset="1" stop-color="#1a4fd0"/></linearGradient>
<linearGradient id="gcp" x1="0" y1="0" x2="1" y2="1"><stop offset="0" stop-color="#2aa8ff"/><stop offset=".4" stop-color="#38d08a"/><stop offset=".65" stop-color="#ffc43d"/><stop offset="1" stop-color="#ff5f8f"/></linearGradient>
<linearGradient id="ged" x1="0" y1="0" x2="1" y2="1"><stop offset="0" stop-color="#3fd07a"/><stop offset=".45" stop-color="#2aa7e8"/><stop offset="1" stop-color="#0c59b8"/></linearGradient>
<linearGradient id="gwat" x1="0" y1="0" x2="1" y2="0"><stop offset="0" stop-color="#2f9fe0"/><stop offset=".6" stop-color="#6fb8e6"/><stop offset="1" stop-color="#b7d3ea"/></linearGradient><linearGradient id="gtv" x1="0" y1="0" x2="1" y2="1"><stop offset="0" stop-color="#ffffff"/><stop offset="1" stop-color="#dcdcdc"/></linearGradient><linearGradient id="gcpl" x1="0" y1="0" x2="0" y2="1"><stop offset="0" stop-color="#1f8ff0"/><stop offset=".45" stop-color="#2fc4a0"/><stop offset=".8" stop-color="#f3d23c"/><stop offset="1" stop-color="#ffb03a"/></linearGradient><linearGradient id="gcpr" x1="0" y1="0" x2="0" y2="1"><stop offset="0" stop-color="#2a6fe8"/><stop offset=".3" stop-color="#b860e8"/><stop offset=".7" stop-color="#ff6a9a"/><stop offset="1" stop-color="#ff8a3c"/></linearGradient><clipPath id="swc"><rect x="727" y="1031" width="66" height="38" rx="19"/></clipPath>
</defs>
<!-- weather -->
<circle cx="48.500" cy="1046.500" r="5.500" fill="#f7941d"/>
<path d="M31 1062.900 C26 1062.900 24.600 1058.500 25.800 1055.600 C27 1052.600 30.300 1051.500 32.500 1052 C32.500 1046.500 38 1043.300 42.500 1044.300 C46 1045.100 48 1047.800 48.400 1050 C52 1049.500 55.200 1052.500 55.200 1056.500 C55.200 1060.500 52 1062.900 49 1062.900 Z" fill="url(#gcl)"/>
<path d="M33 1053 C36 1052.500 38.500 1054 39.500 1056 M42 1056 C42.500 1052.500 45.500 1050.300 48.400 1050" fill="none" stroke="#a9c6f3" stroke-width=".9"/>
<circle cx="48.900" cy="1037.700" r="9.900" fill="#c42b1c"/>
<text x="48.900" y="1043" font-size="14.500" fill="#fff" text-anchor="middle">5</text>
<text id="tb_temp" x="64.300" y="1045" font-size="16.400" fill="#1a1a1a" textLength="31.500" lengthAdjust="spacingAndGlyphs">24°C</text>
<text id="tb_wx" x="64" y="1064.800" font-size="15.500" fill="#5c5c5c" textLength="94" lengthAdjust="spacingAndGlyphs">Mostly cloudy</text>
<!-- windows logo -->
<g fill="url(#gw)"><rect x="473" y="1036" width="13.600" height="13.600" rx="1"/><rect x="488.100" y="1036" width="13.600" height="13.600" rx="1"/><rect x="473" y="1051.100" width="13.600" height="13.600" rx="1"/><rect x="488.100" y="1051.100" width="13.600" height="13.600" rx="1"/></g>
<!-- search -->
<rect x="519.500" y="1030.500" width="274" height="39" rx="19.500" fill="#fbfbfb" stroke="#d9d9d9" stroke-width="1"/>
<circle cx="541.200" cy="1048.600" r="6.300" fill="none" stroke="#222" stroke-width="1.900"/><path d="M545.800 1053.400 L551 1058.600" stroke="#222" stroke-width="2.100" stroke-linecap="round"/>
<text id="tb_search" x="565" y="1056.500" font-size="17.500" fill="#5a5a5a" textLength="51" lengthAdjust="spacingAndGlyphs">Search</text>
<g clip-path="url(#swc)"><path d="M727.500 1059 C736 1047 770 1045.500 792 1046.500 L793 1066 C770 1068.500 740 1068 727.500 1059 Z" fill="url(#gwat)"/><path d="M764 1046.800 L767.500 1042.500 L770.500 1045 L775 1041.300 L779.500 1044.800 L784 1042 L789 1046.500 V1048 H764 Z" fill="#c9a9c6"/><path d="M773.300 1042.700 L775 1041.300 L777 1042.900 Z M782.500 1043 L784 1042 L785.800 1043.600 Z M766.300 1044 L767.500 1042.500 L769 1043.800Z" fill="#f3c9a8"/>
<ellipse cx="762" cy="1061.500" rx="18" ry="3.500" fill="#2a86c8" opacity=".45"/>
<path d="M744.600 1039.800 C749.500 1039.500 748.600 1046 746.600 1050 C745 1053.500 746 1057.500 750 1059" fill="none" stroke="#f2effa" stroke-width="3.600" stroke-linecap="round"/><circle cx="744.500" cy="1039.700" r="2.300" fill="#f2effa"/>
<path d="M745.500 1057.500 C750 1051.500 764 1051 778 1053.800 C773 1062.500 752 1065 745.500 1057.500Z" fill="#f4f1fb"/><path d="M753 1057.300 C759 1053.300 768 1053.500 775.500 1055 C770 1060.500 758 1061.500 753 1057.300Z" fill="#e2dcf2"/>
<path d="M742.600 1038.600 L738.400 1042.200 L743.800 1041.400 Z" fill="#e39a2e"/><circle cx="743.800" cy="1039.300" r=".6" fill="#222"/></g>
<!-- task view -->
<rect x="809" y="1043.800" width="22.300" height="20" rx="2.200" fill="#262626"/>
<rect x="816.300" y="1036" width="22.200" height="19.600" rx="1.500" fill="url(#gtv)" opacity=".92"/>
<rect x="816.300" y="1043.800" width="15" height="11.800" fill="#bdbdbd"/>
<!-- chrome -->
<rect x="855" y="1025.700" width="47.700" height="48.300" rx="6" fill="#f9f9f9" stroke="#e3e3e3" stroke-width=".8"/>
<g transform="translate(878.750 1050)"><circle r="15" fill="#fff"/><path d="M0 0 L-12.990 -7.500 A15 15 0 0 1 12.990 -7.500 Z" fill="#ea4335"/><path d="M0 0 L12.990 -7.500 A15 15 0 0 1 0 15 Z" fill="#fbc116"/><path d="M0 0 L0 15 A15 15 0 0 1 -12.990 -7.500 Z" fill="#34a853"/><path d="M-12.990 -7.500 A15 15 0 0 1 12.990 -7.500 L0 -7.500Z" fill="#ea4335"/><circle r="7" fill="#fff"/><circle r="5.600" fill="#4285f4"/></g>
<circle cx="889.700" cy="1038.800" r="10" fill="#3c3c40"/><ellipse cx="889.500" cy="1042" rx="4.500" ry="6.500" fill="#16171f"/><circle cx="889.500" cy="1033.500" r="2.500" fill="#e6cfc2"/><path d="M881.500 1044 A10 10 0 0 1 884 1031 V1044Z" fill="#6f5a48"/>
<rect x="869" y="1070.200" width="19.800" height="3.800" rx="1.900" fill="#e6005c"/>
<!-- copilot -->
<path d="M925.500 1036 H938.500 C941 1036 942.300 1037.300 943 1039.500 L944 1043.500 H936.500 C934.500 1043.500 933.300 1044.500 932.700 1046.500 L930 1056.500 C929.300 1059 927.800 1060 925.500 1060 H922.500 C920 1060 918.700 1058 919.400 1055.500 L923 1039.500 C923.500 1037.300 924.200 1036 925.500 1036Z" fill="url(#gcpl)"/>
<path d="M942 1063 H929 C926.500 1063 925.200 1061.700 924.600 1059.500 L924 1056.500 H931.500 C933.500 1056.500 934.700 1055.500 935.300 1053.500 L938 1043.500 C938.700 1041 940.200 1040 942.500 1040 H945.500 C948 1040 949.300 1042 948.600 1044.500 L945 1059.500 C944.500 1061.700 943.500 1063 942 1063Z" fill="url(#gcpr)"/>
<!-- store -->
<rect x="974" y="1040" width="29" height="25" rx="4" fill="url(#gst)"/><path d="M981.500 1041 V1039 A2.500 2.500 0 0 1 984 1036.500 H993 A2.500 2.500 0 0 1 995.500 1039 V1041" fill="none" stroke="#35b4f5" stroke-width="2"/>
<rect x="983" y="1046.500" width="5" height="5" fill="#f25022"/><rect x="989" y="1046.500" width="5" height="5" fill="#7fba00"/><rect x="983" y="1052.500" width="5" height="5" fill="#00a4ef"/><rect x="989" y="1052.500" width="5" height="5" fill="#ffb900"/>
<!-- edge -->
<circle cx="1044" cy="1050" r="15" fill="url(#ged)"/><path d="M1036 1052 C1036 1045 1042 1042.500 1046.500 1044 C1050 1045 1052 1048 1051 1051.500 L1059 1051 C1059 1040 1050 1034 1041 1035.500 C1050 1036 1056 1043 1054.500 1049.500" fill="#4bd06a" opacity=".75"/><path d="M1038.500 1050 C1039.500 1046 1044 1045 1046.500 1047 C1049.500 1049.500 1047.500 1052.500 1046.500 1053 C1049 1056.500 1054 1056 1057 1054 C1054 1061 1046 1064 1041 1061 C1037 1058.500 1037 1054 1038.500 1050Z" fill="#f3f7fb"/>
<!-- MA -->
<rect x="1084" y="1035" width="30" height="30" fill="url(#gma)"/><path d="M1090 1059 L1098.500 1041 H1102 L1093.500 1059Z M1097 1059 L1105.500 1041 H1109 L1109 1059 H1105.500 V1049 L1100.500 1059Z" fill="#fff"/>
<!-- adobe express -->
<rect x="1139" y="1035" width="30" height="30" rx="6" fill="#05091a"/><path d="M1146.500 1058 L1152.200 1042.500 C1152.800 1041 1155.200 1041 1155.800 1042.500 L1161.500 1058 H1157.200 L1154 1048.500 L1150.800 1058 Z" fill="url(#gae)"/>
<!-- explorer -->
<path d="M1194 1039.500 A2 2 0 0 1 1196 1037.500 H1203 L1206 1040.500 H1222 A2 2 0 0 1 1224 1042.500 V1046 H1194Z" fill="#e8a81f"/><rect x="1194" y="1042.500" width="30" height="21" rx="2" fill="url(#gfo)"/><path d="M1199.500 1063.500 V1058 A2 2 0 0 1 1201.500 1056 H1216.500 A2 2 0 0 1 1218.500 1058 V1063.500Z" fill="#1f83d8"/><rect x="1203.500" y="1059" width="11" height="1.800" rx=".9" fill="#0d4fa0"/>
<rect x="1205" y="1070.300" width="8" height="3" rx="1.500" fill="#8a8a8a"/>
<!-- word -->
<rect x="1253" y="1036.500" width="22" height="27" rx="3" fill="url(#gwd)"/><rect x="1248.500" y="1048.500" width="13" height="12.500" rx="2.500" fill="#1d45b8"/><text x="1255" y="1059" font-size="10.500" font-weight="bold" fill="#fff" text-anchor="middle">W</text>
<!-- wps -->
<rect x="1304" y="1035" width="30" height="30" rx="4.500" fill="#f5202e"/><path d="M1309 1044 H1313.500 L1316 1053 L1318.800 1044 H1322 L1324.600 1050 L1326 1044 H1330.500 L1326.500 1057 H1323 L1320.300 1050.500 L1317.800 1057 H1314 Z" fill="#fff"/>
<!-- vpn -->
<path d="M1373.500 1035 L1387 1042.500 V1057.500 L1373.500 1065 L1360 1057.500 V1042.500Z" fill="#10a58a"/><rect x="1369.500" y="1050" width="8" height="6.500" rx="1" fill="#f2b84b"/><path d="M1371.300 1050 V1048 A2.200 2.200 0 0 1 1375.700 1048 V1050" fill="none" stroke="#f2b84b" stroke-width="1.200"/><path d="M1369.500 1044.500 A5.500 5.500 0 0 1 1377.500 1044.500 M1367.500 1042.500 A8.500 8.500 0 0 1 1379.500 1042.500" fill="none" stroke="#d7f4ec" stroke-width="1.100"/>
<rect x="1369.500" y="1070.300" width="8" height="3" rx="1.500" fill="#8a8a8a"/>
<!-- arduino -->
<rect x="1415" y="1036.500" width="27.500" height="27.500" rx="6" fill="#1c9aa0"/><path d="M1428.750 1050 C1426.500 1046.500 1424.500 1045.800 1422.800 1045.800 A4.200 4.200 0 0 0 1422.800 1054.200 C1424.500 1054.200 1426.500 1053.500 1428.750 1050 C1431 1046.500 1433 1045.800 1434.700 1045.800 A4.200 4.200 0 0 1 1434.700 1054.200 C1433 1054.200 1431 1053.500 1428.750 1050Z" fill="none" stroke="#e9f7f7" stroke-width="1.700"/>
<rect x="1424.750" y="1070.300" width="8" height="3" rx="1.500" fill="#8a8a8a"/>
<!-- tray -->
<path d="M1541.800 1053 L1548.200 1046.600 L1554.600 1053" fill="none" stroke="#1a1a1a" stroke-width="1.700" stroke-linecap="round" stroke-linejoin="round"/>
<rect x="1578" y="1040.200" width="20" height="19.500" rx="3" fill="#fff"/><path d="M1583.500 1054.500 H1593 A3.300 3.300 0 0 0 1593.500 1048 A5 5 0 0 0 1584 1047.500 A3.600 3.600 0 0 0 1583.500 1054.500Z" fill="none" stroke="#2979ff" stroke-width="1.400" stroke-linejoin="round"/><path d="M1586.500 1051.500 L1588.500 1053 L1590.500 1050.500" fill="none" stroke="#2979ff" stroke-width="1.100"/>
<path d="M1622 1056 H1633 A4 4 0 0 0 1633.500 1048 A6.500 6.500 0 0 0 1621.500 1047 A4.600 4.600 0 0 0 1622 1056Z" fill="#9a9a9a" stroke="#777" stroke-width=".8"/>
<circle cx="1632.500" cy="1054.400" r="5.400" fill="#d3122a"/><path d="M1630.500 1052.400 L1634.500 1056.400 M1634.500 1052.400 L1630.500 1056.400" stroke="#fff" stroke-width="1.400" stroke-linecap="round"/>
<text id="tb_eng" x="1676.300" y="1046" font-size="15" fill="#1a1a1a" text-anchor="middle" textLength="28.500" lengthAdjust="spacingAndGlyphs">ENG</text>
<text id="tb_us" x="1676.300" y="1065.400" font-size="15" fill="#1a1a1a" text-anchor="middle" textLength="17.700" lengthAdjust="spacingAndGlyphs">US</text>
<!-- wifi -->
<g fill="none" stroke="#1a1a1a" stroke-width="1.500" stroke-linecap="round"><path d="M1713.500 1047.500 A13.500 13.500 0 0 1 1732.500 1047.500"/><path d="M1716.500 1050.700 A9.200 9.200 0 0 1 1729.500 1050.700"/><path d="M1719.600 1053.800 A4.800 4.800 0 0 1 1726.400 1053.800"/></g><circle cx="1723" cy="1056" r="1.500" fill="#1a1a1a"/>
<!-- volume -->
<path d="M1744 1046.500 H1747.500 L1752 1042.500 V1057.500 L1747.500 1053.500 H1744 Z" fill="none" stroke="#1a1a1a" stroke-width="1.300" stroke-linejoin="round"/><g fill="none" stroke="#1a1a1a" stroke-width="1.300" stroke-linecap="round"><path d="M1754.800 1047 A4.200 4.200 0 0 1 1754.800 1053"/><path d="M1757.300 1044.500 A7.800 7.800 0 0 1 1757.300 1055.500"/><path d="M1759.800 1042 A11.300 11.300 0 0 1 1759.800 1058"/></g>
<!-- battery -->
<rect x="1773.500" y="1044.600" width="22.500" height="11.200" rx="3" fill="none" stroke="#1a1a1a" stroke-width="1.300"/><path d="M1797.300 1048 V1052.500" stroke="#1a1a1a" stroke-width="1.600" stroke-linecap="round"/><rect x="1776" y="1047" width="5.200" height="6.400" rx="1" fill="#f0a30a"/>
<text id="tb_time" x="1895.600" y="1045" font-size="15.500" fill="#1a1a1a" text-anchor="end" textLength="53" lengthAdjust="spacingAndGlyphs">2:42 pm</text>
<text id="tb_date" x="1895.600" y="1064.800" font-size="15.500" fill="#1a1a1a" text-anchor="end" textLength="76.500" lengthAdjust="spacingAndGlyphs">13/03/2026</text>
</svg>
</body></html>
